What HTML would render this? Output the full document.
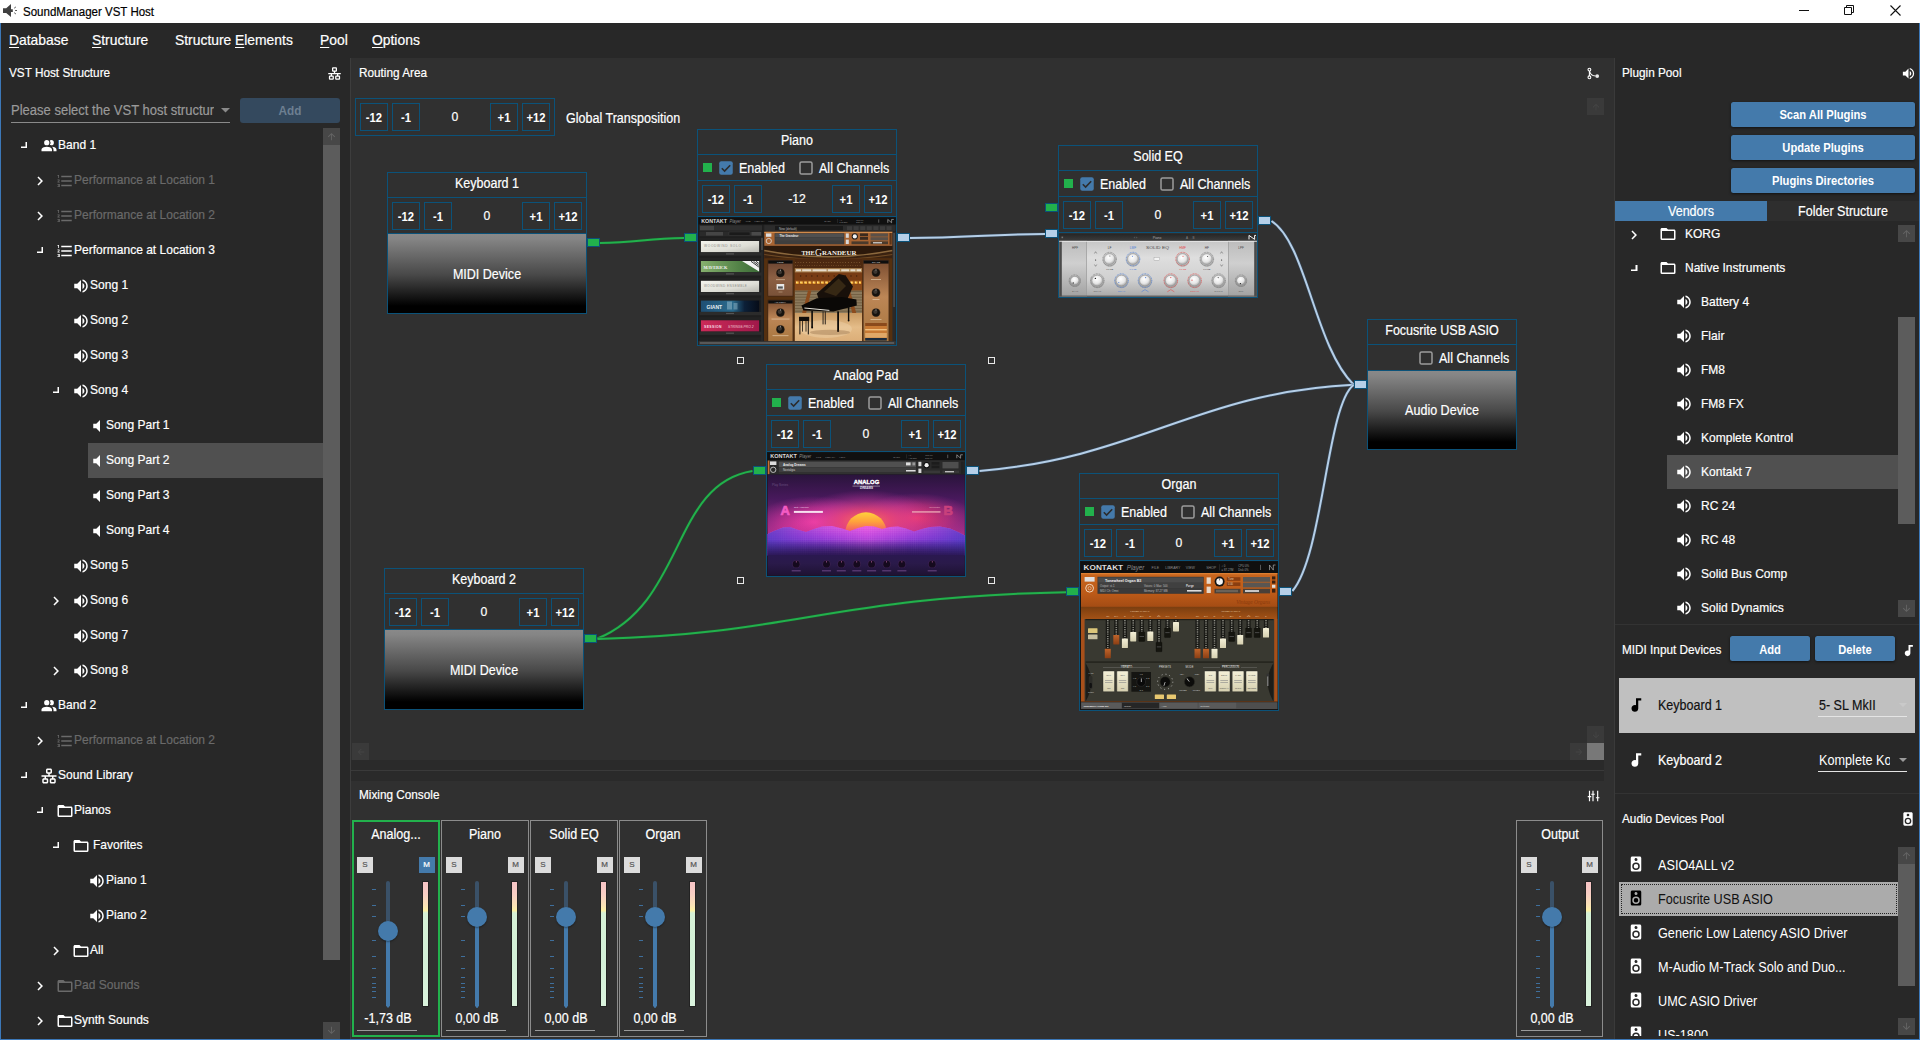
<!DOCTYPE html>
<html><head><meta charset="utf-8"><title>SoundManager VST Host</title>
<style>
html,body{margin:0;padding:0}
body{width:1920px;height:1040px;position:relative;overflow:hidden;background:#303030;font-family:"Liberation Sans",sans-serif;}
body div, body svg{position:absolute;box-sizing:border-box}
.btn{background:#447aab;border-radius:2.5px;box-shadow:0 1px 3px rgba(0,0,0,.55)}
.ak::first-letter{text-decoration:underline;text-underline-offset:1.5px}
</style></head><body>

<div style="left:0px;top:0px;width:1920px;height:23px;background:#ffffff;"></div>
<svg viewBox="0 0 20 22" style="left:0;top:0;width:20px;height:22px"><path d="M3,8.2H6.2L11,4V9.3H12.8V12H11V17L6.2,12.9H3Z" fill="#404040"/><path d="M14.2,8.2L15.9,6.9M15.1,10.5H17M14.2,12.7L15.9,14" stroke="#444" stroke-width="0.9" fill="none"/></svg>
<div style="left:23px;transform:scaleX(0.96);transform-origin:0 50%;top:1.5px;height:20px;line-height:20px;font-size:12px;color:#000;font-weight:400;white-space:nowrap;-webkit-text-stroke:0.2px #000;">SoundManager VST Host</div>
<div style="left:1799px;top:10px;width:10px;height:1px;background:#111;"></div>
<svg viewBox="0 0 10 10" style="left:1844px;top:5px;width:10px;height:10px"><path d="M0.5,2.5H7.5V9.5H0.5Z M2.5,2.5V0.5H9.5V7.5H7.5" fill="none" stroke="#111" stroke-width="1"/></svg>
<svg viewBox="0 0 11 11" style="left:1890px;top:5px;width:11px;height:11px"><path d="M0.5,0.5L10.5,10.5M10.5,0.5L0.5,10.5" fill="none" stroke="#111" stroke-width="1.1"/></svg>
<div style="left:0px;top:23px;width:1920px;height:1017px;background:#282828;"></div>
<div style="left:350px;top:58px;width:1265px;height:982px;background:#303030;"></div>
<div style="left:350px;top:58px;width:1px;height:982px;background:#3d3d3d;"></div>
<div style="left:351px;top:760px;width:1253px;height:21px;background:#2a2a2a;"></div>
<div style="left:351px;top:770px;width:1253px;height:1px;background:#3a3a3a;"></div>
<div style="left:1615px;top:58px;width:305px;height:982px;background:#282828;"></div>
<div style="left:1614px;top:58px;width:1px;height:982px;background:#3a3a3a;"></div>
<div class="ak" style="left:9px;transform:scaleX(0.925);transform-origin:0 50%;top:30.0px;height:20px;line-height:20px;font-size:15px;color:#fff;font-weight:400;white-space:nowrap;-webkit-text-stroke:0.2px #fff;">Database</div>
<div class="ak" style="left:92px;transform:scaleX(0.925);transform-origin:0 50%;top:30.0px;height:20px;line-height:20px;font-size:15px;color:#fff;font-weight:400;white-space:nowrap;-webkit-text-stroke:0.2px #fff;">Structure</div>
<div style="left:175px;transform:scaleX(0.925);transform-origin:0 50%;top:30.0px;height:20px;line-height:20px;font-size:15px;color:#fff;font-weight:400;white-space:nowrap;-webkit-text-stroke:0.2px #fff;">Structure</div>
<div class="ak" style="left:235.1435px;transform:scaleX(0.925);transform-origin:0 50%;top:30.0px;height:20px;line-height:20px;font-size:15px;color:#fff;font-weight:400;white-space:nowrap;-webkit-text-stroke:0.2px #fff;">Elements</div>
<div class="ak" style="left:320px;transform:scaleX(0.925);transform-origin:0 50%;top:30.0px;height:20px;line-height:20px;font-size:15px;color:#fff;font-weight:400;white-space:nowrap;-webkit-text-stroke:0.2px #fff;">Pool</div>
<div class="ak" style="left:372px;transform:scaleX(0.925);transform-origin:0 50%;top:30.0px;height:20px;line-height:20px;font-size:15px;color:#fff;font-weight:400;white-space:nowrap;-webkit-text-stroke:0.2px #fff;">Options</div>
<div style="left:9px;transform:scaleX(0.905);transform-origin:0 50%;top:62.5px;height:20px;line-height:20px;font-size:13px;color:#fff;font-weight:400;white-space:nowrap;-webkit-text-stroke:0.2px #fff;">VST Host Structure</div>
<svg viewBox="0 0 24 24" style="left:326.8px;top:66px;width:15px;height:15px;"><path fill="#fff" d="M10,2C8.89,2 8,2.89 8,4V7C8,8.11 8.89,9 10,9H11V11H2V13H6V15H5C3.89,15 3,15.89 3,17V20C3,21.11 3.89,22 5,22H9C10.11,22 11,21.11 11,20V17C11,15.89 10.11,15 9,15H8V13H16V15H15C13.89,15 13,15.89 13,17V20C13,21.11 13.89,22 15,22H19C20.11,22 21,21.11 21,20V17C21,15.89 20.11,15 19,15H18V13H22V11H13V9H14C15.11,9 16,8.11 16,7V4C16,2.89 15.11,2 14,2H10M10,4H14V7H10V4M5,17H9V20H5V17M15,17H19V20H15V17Z"/></svg>
<div style="left:11px;transform:scaleX(0.93);transform-origin:0 50%;top:100.0px;height:20px;line-height:20px;font-size:14px;color:#9a9a9a;font-weight:400;white-space:nowrap;-webkit-text-stroke:0.2px #9a9a9a;">Please select the VST host structure</div>
<div style="left:214px;top:100px;width:20px;height:20px;background:#282828;"></div>
<svg viewBox="0 0 10 5" style="left:221px;top:108px;width:9px;height:4.5px"><path d="M0,0H10L5,5Z" fill="#8a8a8a"/></svg>
<div style="left:11px;top:122px;width:219px;height:1px;background:#8a8a8a;"></div>
<div style="left:240px;top:98px;width:100px;height:25px;background:#34495e;border-radius:3px;"></div>
<div style="left:-10px;width:600px;text-align:center;transform:scaleX(0.905);transform-origin:50% 50%;top:100.5px;height:20px;line-height:20px;font-size:13px;color:#6d7f91;font-weight:700;white-space:nowrap;">Add</div>
<svg viewBox="0 0 6.5 6.5" style="left:20.5px;top:141.8px;width:6.5px;height:6.5px"><path d="M5.5,0V5.5H0" fill="none" stroke="#fff" stroke-width="2"/></svg>
<svg viewBox="0 0 24 24" style="left:40px;top:136.5px;width:18px;height:18px;"><path fill="#fff" d="M16 17V19H2V17S2 13 9 13 16 17 16 17M12.5 7.5A3.5 3.5 0 1 0 9 11A3.5 3.5 0 0 0 12.5 7.5M15.94 13A5.32 5.32 0 0 1 18 17V19H22V17S22 13.37 15.94 13M15 4A3.39 3.39 0 0 0 13.07 4.59A5 5 0 0 1 13.07 10.41A3.39 3.39 0 0 0 15 11A3.5 3.5 0 0 0 15 4Z"/></svg>
<div style="left:58px;transform:scaleX(0.925);transform-origin:0 50%;top:135.0px;height:20px;line-height:20px;font-size:13px;color:#fff;font-weight:400;white-space:nowrap;-webkit-text-stroke:0.2px #fff;">Band 1</div>
<svg viewBox="0 0 24 24" style="left:30.8px;top:172px;width:18px;height:18px;"><path fill="#fff" d="M8.59,16.58L13.17,12L8.59,7.41L10,6L16,12L10,18L8.59,16.58Z"/></svg>
<svg viewBox="0 0 24 24" style="left:56px;top:171.5px;width:18px;height:18px;"><path fill="#6a6a6a" d="M7,13V11H21V13H7M7,19V17H21V19H7M7,7V5H21V7H7M3,8V5H2V4H4V8H3M2,17V16H5V20H2V19H4V18.5H3V17.5H4V17H2M4.25,10A0.75,0.75 0 0,1 5,10.75C5,10.95 4.92,11.14 4.79,11.27L3.12,13H5V14H2V13.08L4,11H2V10H4.25Z"/></svg>
<div style="left:74px;transform:scaleX(0.925);transform-origin:0 50%;top:170.0px;height:20px;line-height:20px;font-size:13px;color:#6a6a6a;font-weight:400;white-space:nowrap;-webkit-text-stroke:0.2px #6a6a6a;">Performance at Location 1</div>
<svg viewBox="0 0 24 24" style="left:30.8px;top:207px;width:18px;height:18px;"><path fill="#fff" d="M8.59,16.58L13.17,12L8.59,7.41L10,6L16,12L10,18L8.59,16.58Z"/></svg>
<svg viewBox="0 0 24 24" style="left:56px;top:206.5px;width:18px;height:18px;"><path fill="#6a6a6a" d="M7,13V11H21V13H7M7,19V17H21V19H7M7,7V5H21V7H7M3,8V5H2V4H4V8H3M2,17V16H5V20H2V19H4V18.5H3V17.5H4V17H2M4.25,10A0.75,0.75 0 0,1 5,10.75C5,10.95 4.92,11.14 4.79,11.27L3.12,13H5V14H2V13.08L4,11H2V10H4.25Z"/></svg>
<div style="left:74px;transform:scaleX(0.925);transform-origin:0 50%;top:205.0px;height:20px;line-height:20px;font-size:13px;color:#6a6a6a;font-weight:400;white-space:nowrap;-webkit-text-stroke:0.2px #6a6a6a;">Performance at Location 2</div>
<svg viewBox="0 0 6.5 6.5" style="left:36.5px;top:246.8px;width:6.5px;height:6.5px"><path d="M5.5,0V5.5H0" fill="none" stroke="#fff" stroke-width="2"/></svg>
<svg viewBox="0 0 24 24" style="left:56px;top:241.5px;width:18px;height:18px;"><path fill="#fff" d="M7,13V11H21V13H7M7,19V17H21V19H7M7,7V5H21V7H7M3,8V5H2V4H4V8H3M2,17V16H5V20H2V19H4V18.5H3V17.5H4V17H2M4.25,10A0.75,0.75 0 0,1 5,10.75C5,10.95 4.92,11.14 4.79,11.27L3.12,13H5V14H2V13.08L4,11H2V10H4.25Z"/></svg>
<div style="left:74px;transform:scaleX(0.925);transform-origin:0 50%;top:240.0px;height:20px;line-height:20px;font-size:13px;color:#fff;font-weight:400;white-space:nowrap;-webkit-text-stroke:0.2px #fff;">Performance at Location 3</div>
<svg viewBox="0 0 24 24" style="left:72px;top:276.5px;width:18px;height:18px;"><path fill="#fff" d="M14,3.23V5.29C16.89,6.15 19,8.83 19,12C19,15.17 16.89,17.84 14,18.7V20.77C18,19.86 21,16.28 21,12C21,7.72 18,4.14 14,3.23M16.5,12C16.5,10.23 15.5,8.71 14,7.97V16C15.5,15.29 16.5,13.76 16.5,12M3,9V15H7L12,20V4L7,9H3Z"/></svg>
<div style="left:90px;transform:scaleX(0.925);transform-origin:0 50%;top:275.0px;height:20px;line-height:20px;font-size:13px;color:#fff;font-weight:400;white-space:nowrap;-webkit-text-stroke:0.2px #fff;">Song 1</div>
<svg viewBox="0 0 24 24" style="left:72px;top:311.5px;width:18px;height:18px;"><path fill="#fff" d="M14,3.23V5.29C16.89,6.15 19,8.83 19,12C19,15.17 16.89,17.84 14,18.7V20.77C18,19.86 21,16.28 21,12C21,7.72 18,4.14 14,3.23M16.5,12C16.5,10.23 15.5,8.71 14,7.97V16C15.5,15.29 16.5,13.76 16.5,12M3,9V15H7L12,20V4L7,9H3Z"/></svg>
<div style="left:90px;transform:scaleX(0.925);transform-origin:0 50%;top:310.0px;height:20px;line-height:20px;font-size:13px;color:#fff;font-weight:400;white-space:nowrap;-webkit-text-stroke:0.2px #fff;">Song 2</div>
<svg viewBox="0 0 24 24" style="left:72px;top:346.5px;width:18px;height:18px;"><path fill="#fff" d="M14,3.23V5.29C16.89,6.15 19,8.83 19,12C19,15.17 16.89,17.84 14,18.7V20.77C18,19.86 21,16.28 21,12C21,7.72 18,4.14 14,3.23M16.5,12C16.5,10.23 15.5,8.71 14,7.97V16C15.5,15.29 16.5,13.76 16.5,12M3,9V15H7L12,20V4L7,9H3Z"/></svg>
<div style="left:90px;transform:scaleX(0.925);transform-origin:0 50%;top:345.0px;height:20px;line-height:20px;font-size:13px;color:#fff;font-weight:400;white-space:nowrap;-webkit-text-stroke:0.2px #fff;">Song 3</div>
<svg viewBox="0 0 6.5 6.5" style="left:52.5px;top:386.8px;width:6.5px;height:6.5px"><path d="M5.5,0V5.5H0" fill="none" stroke="#fff" stroke-width="2"/></svg>
<svg viewBox="0 0 24 24" style="left:72px;top:381.5px;width:18px;height:18px;"><path fill="#fff" d="M14,3.23V5.29C16.89,6.15 19,8.83 19,12C19,15.17 16.89,17.84 14,18.7V20.77C18,19.86 21,16.28 21,12C21,7.72 18,4.14 14,3.23M16.5,12C16.5,10.23 15.5,8.71 14,7.97V16C15.5,15.29 16.5,13.76 16.5,12M3,9V15H7L12,20V4L7,9H3Z"/></svg>
<div style="left:90px;transform:scaleX(0.925);transform-origin:0 50%;top:380.0px;height:20px;line-height:20px;font-size:13px;color:#fff;font-weight:400;white-space:nowrap;-webkit-text-stroke:0.2px #fff;">Song 4</div>
<svg viewBox="0 0 24 24" style="left:88px;top:416.5px;width:18px;height:18px;"><path fill="#fff" d="M7,9V15H11L16,20V4L11,9H7Z"/></svg>
<div style="left:106px;transform:scaleX(0.925);transform-origin:0 50%;top:415.0px;height:20px;line-height:20px;font-size:13px;color:#fff;font-weight:400;white-space:nowrap;-webkit-text-stroke:0.2px #fff;">Song Part 1</div>
<div style="left:88px;top:443.0px;width:235px;height:35px;background:#505050;"></div>
<svg viewBox="0 0 24 24" style="left:88px;top:451.5px;width:18px;height:18px;"><path fill="#fff" d="M7,9V15H11L16,20V4L11,9H7Z"/></svg>
<div style="left:106px;transform:scaleX(0.925);transform-origin:0 50%;top:450.0px;height:20px;line-height:20px;font-size:13px;color:#fff;font-weight:400;white-space:nowrap;-webkit-text-stroke:0.2px #fff;">Song Part 2</div>
<svg viewBox="0 0 24 24" style="left:88px;top:486.5px;width:18px;height:18px;"><path fill="#fff" d="M7,9V15H11L16,20V4L11,9H7Z"/></svg>
<div style="left:106px;transform:scaleX(0.925);transform-origin:0 50%;top:485.0px;height:20px;line-height:20px;font-size:13px;color:#fff;font-weight:400;white-space:nowrap;-webkit-text-stroke:0.2px #fff;">Song Part 3</div>
<svg viewBox="0 0 24 24" style="left:88px;top:521.5px;width:18px;height:18px;"><path fill="#fff" d="M7,9V15H11L16,20V4L11,9H7Z"/></svg>
<div style="left:106px;transform:scaleX(0.925);transform-origin:0 50%;top:520.0px;height:20px;line-height:20px;font-size:13px;color:#fff;font-weight:400;white-space:nowrap;-webkit-text-stroke:0.2px #fff;">Song Part 4</div>
<svg viewBox="0 0 24 24" style="left:72px;top:556.5px;width:18px;height:18px;"><path fill="#fff" d="M14,3.23V5.29C16.89,6.15 19,8.83 19,12C19,15.17 16.89,17.84 14,18.7V20.77C18,19.86 21,16.28 21,12C21,7.72 18,4.14 14,3.23M16.5,12C16.5,10.23 15.5,8.71 14,7.97V16C15.5,15.29 16.5,13.76 16.5,12M3,9V15H7L12,20V4L7,9H3Z"/></svg>
<div style="left:90px;transform:scaleX(0.925);transform-origin:0 50%;top:555.0px;height:20px;line-height:20px;font-size:13px;color:#fff;font-weight:400;white-space:nowrap;-webkit-text-stroke:0.2px #fff;">Song 5</div>
<svg viewBox="0 0 24 24" style="left:46.8px;top:592px;width:18px;height:18px;"><path fill="#fff" d="M8.59,16.58L13.17,12L8.59,7.41L10,6L16,12L10,18L8.59,16.58Z"/></svg>
<svg viewBox="0 0 24 24" style="left:72px;top:591.5px;width:18px;height:18px;"><path fill="#fff" d="M14,3.23V5.29C16.89,6.15 19,8.83 19,12C19,15.17 16.89,17.84 14,18.7V20.77C18,19.86 21,16.28 21,12C21,7.72 18,4.14 14,3.23M16.5,12C16.5,10.23 15.5,8.71 14,7.97V16C15.5,15.29 16.5,13.76 16.5,12M3,9V15H7L12,20V4L7,9H3Z"/></svg>
<div style="left:90px;transform:scaleX(0.925);transform-origin:0 50%;top:590.0px;height:20px;line-height:20px;font-size:13px;color:#fff;font-weight:400;white-space:nowrap;-webkit-text-stroke:0.2px #fff;">Song 6</div>
<svg viewBox="0 0 24 24" style="left:72px;top:626.5px;width:18px;height:18px;"><path fill="#fff" d="M14,3.23V5.29C16.89,6.15 19,8.83 19,12C19,15.17 16.89,17.84 14,18.7V20.77C18,19.86 21,16.28 21,12C21,7.72 18,4.14 14,3.23M16.5,12C16.5,10.23 15.5,8.71 14,7.97V16C15.5,15.29 16.5,13.76 16.5,12M3,9V15H7L12,20V4L7,9H3Z"/></svg>
<div style="left:90px;transform:scaleX(0.925);transform-origin:0 50%;top:625.0px;height:20px;line-height:20px;font-size:13px;color:#fff;font-weight:400;white-space:nowrap;-webkit-text-stroke:0.2px #fff;">Song 7</div>
<svg viewBox="0 0 24 24" style="left:46.8px;top:662px;width:18px;height:18px;"><path fill="#fff" d="M8.59,16.58L13.17,12L8.59,7.41L10,6L16,12L10,18L8.59,16.58Z"/></svg>
<svg viewBox="0 0 24 24" style="left:72px;top:661.5px;width:18px;height:18px;"><path fill="#fff" d="M14,3.23V5.29C16.89,6.15 19,8.83 19,12C19,15.17 16.89,17.84 14,18.7V20.77C18,19.86 21,16.28 21,12C21,7.72 18,4.14 14,3.23M16.5,12C16.5,10.23 15.5,8.71 14,7.97V16C15.5,15.29 16.5,13.76 16.5,12M3,9V15H7L12,20V4L7,9H3Z"/></svg>
<div style="left:90px;transform:scaleX(0.925);transform-origin:0 50%;top:660.0px;height:20px;line-height:20px;font-size:13px;color:#fff;font-weight:400;white-space:nowrap;-webkit-text-stroke:0.2px #fff;">Song 8</div>
<svg viewBox="0 0 6.5 6.5" style="left:20.5px;top:701.8px;width:6.5px;height:6.5px"><path d="M5.5,0V5.5H0" fill="none" stroke="#fff" stroke-width="2"/></svg>
<svg viewBox="0 0 24 24" style="left:40px;top:696.5px;width:18px;height:18px;"><path fill="#fff" d="M16 17V19H2V17S2 13 9 13 16 17 16 17M12.5 7.5A3.5 3.5 0 1 0 9 11A3.5 3.5 0 0 0 12.5 7.5M15.94 13A5.32 5.32 0 0 1 18 17V19H22V17S22 13.37 15.94 13M15 4A3.39 3.39 0 0 0 13.07 4.59A5 5 0 0 1 13.07 10.41A3.39 3.39 0 0 0 15 11A3.5 3.5 0 0 0 15 4Z"/></svg>
<div style="left:58px;transform:scaleX(0.925);transform-origin:0 50%;top:695.0px;height:20px;line-height:20px;font-size:13px;color:#fff;font-weight:400;white-space:nowrap;-webkit-text-stroke:0.2px #fff;">Band 2</div>
<svg viewBox="0 0 24 24" style="left:30.8px;top:732px;width:18px;height:18px;"><path fill="#fff" d="M8.59,16.58L13.17,12L8.59,7.41L10,6L16,12L10,18L8.59,16.58Z"/></svg>
<svg viewBox="0 0 24 24" style="left:56px;top:731.5px;width:18px;height:18px;"><path fill="#6a6a6a" d="M7,13V11H21V13H7M7,19V17H21V19H7M7,7V5H21V7H7M3,8V5H2V4H4V8H3M2,17V16H5V20H2V19H4V18.5H3V17.5H4V17H2M4.25,10A0.75,0.75 0 0,1 5,10.75C5,10.95 4.92,11.14 4.79,11.27L3.12,13H5V14H2V13.08L4,11H2V10H4.25Z"/></svg>
<div style="left:74px;transform:scaleX(0.925);transform-origin:0 50%;top:730.0px;height:20px;line-height:20px;font-size:13px;color:#6a6a6a;font-weight:400;white-space:nowrap;-webkit-text-stroke:0.2px #6a6a6a;">Performance at Location 2</div>
<svg viewBox="0 0 6.5 6.5" style="left:20.5px;top:771.8px;width:6.5px;height:6.5px"><path d="M5.5,0V5.5H0" fill="none" stroke="#fff" stroke-width="2"/></svg>
<svg viewBox="0 0 24 24" style="left:40px;top:766.5px;width:18px;height:18px;"><path fill="#fff" d="M10,2C8.89,2 8,2.89 8,4V7C8,8.11 8.89,9 10,9H11V11H2V13H6V15H5C3.89,15 3,15.89 3,17V20C3,21.11 3.89,22 5,22H9C10.11,22 11,21.11 11,20V17C11,15.89 10.11,15 9,15H8V13H16V15H15C13.89,15 13,15.89 13,17V20C13,21.11 13.89,22 15,22H19C20.11,22 21,21.11 21,20V17C21,15.89 20.11,15 19,15H18V13H22V11H13V9H14C15.11,9 16,8.11 16,7V4C16,2.89 15.11,2 14,2H10M10,4H14V7H10V4M5,17H9V20H5V17M15,17H19V20H15V17Z"/></svg>
<div style="left:58px;transform:scaleX(0.925);transform-origin:0 50%;top:765.0px;height:20px;line-height:20px;font-size:13px;color:#fff;font-weight:400;white-space:nowrap;-webkit-text-stroke:0.2px #fff;">Sound Library</div>
<svg viewBox="0 0 6.5 6.5" style="left:36.5px;top:806.8px;width:6.5px;height:6.5px"><path d="M5.5,0V5.5H0" fill="none" stroke="#fff" stroke-width="2"/></svg>
<svg viewBox="0 0 24 24" style="left:56px;top:801.5px;width:18px;height:18px;"><path fill="#fff" d="M20,18H4V8H20M20,6H12L10,4H4C2.89,4 2,4.89 2,6V18A2,2 0 0,0 4,20H20A2,2 0 0,0 22,18V8C22,6.89 21.1,6 20,6Z"/></svg>
<div style="left:74px;transform:scaleX(0.925);transform-origin:0 50%;top:800.0px;height:20px;line-height:20px;font-size:13px;color:#fff;font-weight:400;white-space:nowrap;-webkit-text-stroke:0.2px #fff;">Pianos</div>
<svg viewBox="0 0 6.5 6.5" style="left:52.5px;top:841.8px;width:6.5px;height:6.5px"><path d="M5.5,0V5.5H0" fill="none" stroke="#fff" stroke-width="2"/></svg>
<svg viewBox="0 0 24 24" style="left:72px;top:836.5px;width:18px;height:18px;"><path fill="#fff" d="M20,18H4V8H20M20,6H12L10,4H4C2.89,4 2,4.89 2,6V18A2,2 0 0,0 4,20H20A2,2 0 0,0 22,18V8C22,6.89 21.1,6 20,6Z"/></svg>
<div style="left:93px;transform:scaleX(0.925);transform-origin:0 50%;top:835.0px;height:20px;line-height:20px;font-size:13px;color:#fff;font-weight:400;white-space:nowrap;-webkit-text-stroke:0.2px #fff;">Favorites</div>
<svg viewBox="0 0 24 24" style="left:88px;top:871.5px;width:18px;height:18px;"><path fill="#fff" d="M14,3.23V5.29C16.89,6.15 19,8.83 19,12C19,15.17 16.89,17.84 14,18.7V20.77C18,19.86 21,16.28 21,12C21,7.72 18,4.14 14,3.23M16.5,12C16.5,10.23 15.5,8.71 14,7.97V16C15.5,15.29 16.5,13.76 16.5,12M3,9V15H7L12,20V4L7,9H3Z"/></svg>
<div style="left:106px;transform:scaleX(0.925);transform-origin:0 50%;top:870.0px;height:20px;line-height:20px;font-size:13px;color:#fff;font-weight:400;white-space:nowrap;-webkit-text-stroke:0.2px #fff;">Piano 1</div>
<svg viewBox="0 0 24 24" style="left:88px;top:906.5px;width:18px;height:18px;"><path fill="#fff" d="M14,3.23V5.29C16.89,6.15 19,8.83 19,12C19,15.17 16.89,17.84 14,18.7V20.77C18,19.86 21,16.28 21,12C21,7.72 18,4.14 14,3.23M16.5,12C16.5,10.23 15.5,8.71 14,7.97V16C15.5,15.29 16.5,13.76 16.5,12M3,9V15H7L12,20V4L7,9H3Z"/></svg>
<div style="left:106px;transform:scaleX(0.925);transform-origin:0 50%;top:905.0px;height:20px;line-height:20px;font-size:13px;color:#fff;font-weight:400;white-space:nowrap;-webkit-text-stroke:0.2px #fff;">Piano 2</div>
<svg viewBox="0 0 24 24" style="left:46.8px;top:942px;width:18px;height:18px;"><path fill="#fff" d="M8.59,16.58L13.17,12L8.59,7.41L10,6L16,12L10,18L8.59,16.58Z"/></svg>
<svg viewBox="0 0 24 24" style="left:72px;top:941.5px;width:18px;height:18px;"><path fill="#fff" d="M20,18H4V8H20M20,6H12L10,4H4C2.89,4 2,4.89 2,6V18A2,2 0 0,0 4,20H20A2,2 0 0,0 22,18V8C22,6.89 21.1,6 20,6Z"/></svg>
<div style="left:90px;transform:scaleX(0.925);transform-origin:0 50%;top:940.0px;height:20px;line-height:20px;font-size:13px;color:#fff;font-weight:400;white-space:nowrap;-webkit-text-stroke:0.2px #fff;">All</div>
<svg viewBox="0 0 24 24" style="left:30.8px;top:977px;width:18px;height:18px;"><path fill="#fff" d="M8.59,16.58L13.17,12L8.59,7.41L10,6L16,12L10,18L8.59,16.58Z"/></svg>
<svg viewBox="0 0 24 24" style="left:56px;top:976.5px;width:18px;height:18px;"><path fill="#6a6a6a" d="M20,18H4V8H20M20,6H12L10,4H4C2.89,4 2,4.89 2,6V18A2,2 0 0,0 4,20H20A2,2 0 0,0 22,18V8C22,6.89 21.1,6 20,6Z"/></svg>
<div style="left:74px;transform:scaleX(0.925);transform-origin:0 50%;top:975.0px;height:20px;line-height:20px;font-size:13px;color:#6a6a6a;font-weight:400;white-space:nowrap;-webkit-text-stroke:0.2px #6a6a6a;">Pad Sounds</div>
<svg viewBox="0 0 24 24" style="left:30.8px;top:1012px;width:18px;height:18px;"><path fill="#fff" d="M8.59,16.58L13.17,12L8.59,7.41L10,6L16,12L10,18L8.59,16.58Z"/></svg>
<svg viewBox="0 0 24 24" style="left:56px;top:1011.5px;width:18px;height:18px;"><path fill="#fff" d="M20,18H4V8H20M20,6H12L10,4H4C2.89,4 2,4.89 2,6V18A2,2 0 0,0 4,20H20A2,2 0 0,0 22,18V8C22,6.89 21.1,6 20,6Z"/></svg>
<div style="left:74px;transform:scaleX(0.925);transform-origin:0 50%;top:1010.0px;height:20px;line-height:20px;font-size:13px;color:#fff;font-weight:400;white-space:nowrap;-webkit-text-stroke:0.2px #fff;">Synth Sounds</div>
<div style="left:323px;top:128px;width:17px;height:17px;background:#474747;"></div>
<svg viewBox="0 0 24 24" style="left:326px;top:131px;width:11px;height:11px;"><path fill="#646464" d="M13,20H11V8L5.5,13.5L4.08,12.08L12,4.16L19.92,12.08L18.5,13.5L13,8V20Z"/></svg>
<div style="left:323px;top:1022px;width:17px;height:17px;background:#474747;"></div>
<svg viewBox="0 0 24 24" style="left:326px;top:1025px;width:11px;height:11px;transform:rotate(180deg);"><path fill="#646464" d="M13,20H11V8L5.5,13.5L4.08,12.08L12,4.16L19.92,12.08L18.5,13.5L13,8V20Z"/></svg>
<div style="left:323px;top:145px;width:17px;height:815px;background:#5c5c5c;"></div>
<div style="left:358.5px;transform:scaleX(0.905);transform-origin:0 50%;top:62.5px;height:20px;line-height:20px;font-size:13px;color:#fff;font-weight:400;white-space:nowrap;-webkit-text-stroke:0.2px #fff;">Routing Area</div>
<svg viewBox="1584 66 16 14" style="left:1584px;top:66px;width:16px;height:14px"><g fill="none" stroke="#fff" stroke-width="1.1"><circle cx="1589.4" cy="69.6" r="1.4"/><circle cx="1589.4" cy="77.3" r="1.4"/><path d="M1589.4,71V75.9M1589.7,71.2Q1590.2,75.6 1595.6,76"/></g><circle cx="1597.2" cy="76.1" r="1.9" fill="#e8e8e8"/></svg>
<div style="left:1587px;top:98px;width:17px;height:17px;background:#3a3a3a;"></div>
<svg viewBox="0 0 24 24" style="left:1590.5px;top:101.5px;width:10px;height:10px;"><path fill="#454545" d="M13,20H11V8L5.5,13.5L4.08,12.08L12,4.16L19.92,12.08L18.5,13.5L13,8V20Z"/></svg>
<div style="left:1587px;top:726px;width:17px;height:17px;background:#3a3a3a;"></div>
<svg viewBox="0 0 24 24" style="left:1590.5px;top:729.5px;width:10px;height:10px;transform:rotate(180deg);"><path fill="#454545" d="M13,20H11V8L5.5,13.5L4.08,12.08L12,4.16L19.92,12.08L18.5,13.5L13,8V20Z"/></svg>
<div style="left:352px;top:743px;width:17px;height:17px;background:#3a3a3a;"></div>
<svg viewBox="0 0 24 24" style="left:355.5px;top:746.5px;width:10px;height:10px;transform:rotate(-90deg);"><path fill="#454545" d="M13,20H11V8L5.5,13.5L4.08,12.08L12,4.16L19.92,12.08L18.5,13.5L13,8V20Z"/></svg>
<div style="left:1570px;top:743px;width:17px;height:17px;background:#3a3a3a;"></div>
<svg viewBox="0 0 24 24" style="left:1573.5px;top:746.5px;width:10px;height:10px;transform:rotate(90deg);"><path fill="#454545" d="M13,20H11V8L5.5,13.5L4.08,12.08L12,4.16L19.92,12.08L18.5,13.5L13,8V20Z"/></svg>
<div style="left:1587px;top:743px;width:17px;height:17px;background:#787878;"></div>
<div style="left:355px;top:98px;width:200px;height:38px;border:1px solid #0b5279;"></div>
<div style="left:360px;top:103px;width:28px;height:28px;border:1px solid #0b5279;"></div>
<div style="left:74px;width:600px;text-align:center;transform:scaleX(0.9);transform-origin:50% 50%;top:107.6px;height:20px;line-height:20px;font-size:12.5px;color:#fff;font-weight:700;white-space:nowrap;">-12</div>
<div style="left:392px;top:103px;width:28px;height:28px;border:1px solid #0b5279;"></div>
<div style="left:106px;width:600px;text-align:center;transform:scaleX(0.9);transform-origin:50% 50%;top:107.6px;height:20px;line-height:20px;font-size:12.5px;color:#fff;font-weight:700;white-space:nowrap;">-1</div>
<div style="left:490px;top:103px;width:28px;height:28px;border:1px solid #0b5279;"></div>
<div style="left:204px;width:600px;text-align:center;transform:scaleX(0.9);transform-origin:50% 50%;top:107.6px;height:20px;line-height:20px;font-size:12.5px;color:#fff;font-weight:700;white-space:nowrap;">+1</div>
<div style="left:522px;top:103px;width:28px;height:28px;border:1px solid #0b5279;"></div>
<div style="left:236px;width:600px;text-align:center;transform:scaleX(0.9);transform-origin:50% 50%;top:107.6px;height:20px;line-height:20px;font-size:12.5px;color:#fff;font-weight:700;white-space:nowrap;">+12</div>
<div style="left:155px;width:600px;text-align:center;transform:scaleX(0.905);transform-origin:50% 50%;top:106.8px;height:20px;line-height:20px;font-size:13.5px;color:#fff;font-weight:400;white-space:nowrap;-webkit-text-stroke:0.2px #fff;">0</div>
<div style="left:565.5px;transform:scaleX(0.895);transform-origin:0 50%;top:107.5px;height:20px;line-height:20px;font-size:14px;color:#fff;font-weight:400;white-space:nowrap;-webkit-text-stroke:0.2px #fff;">Global Transposition</div>
<svg viewBox="0 0 1920 1040" style="left:0;top:0;width:1920px;height:1040px"><path d="M600,243 C637.8,242.4 646.2,238.6 684,238" fill="none" stroke="#1d5a2e" stroke-width="3.2" opacity="0.55"/><path d="M600,243 C637.8,242.4 646.2,238.6 684,238" fill="none" stroke="#22b14c" stroke-width="2"/><path d="M910,238 C970.8,237.5 984.2,234.5 1045,234" fill="none" stroke="#3c5a78" stroke-width="3.2" opacity="0.55"/><path d="M910,238 C970.8,237.5 984.2,234.5 1045,234" fill="none" stroke="#b5cfe8" stroke-width="2"/><path d="M1271.5,221 C1306.2,242.9 1314.9,346.7 1353.5,384.5" fill="none" stroke="#3c5a78" stroke-width="3.2" opacity="0.55"/><path d="M1271.5,221 C1306.2,242.9 1314.9,346.7 1353.5,384.5" fill="none" stroke="#b5cfe8" stroke-width="2"/><path d="M979.5,471 C1139.0,457.8 1196.4,392.6 1353.5,384.8" fill="none" stroke="#3c5a78" stroke-width="3.2" opacity="0.55"/><path d="M979.5,471 C1139.0,457.8 1196.4,392.6 1353.5,384.8" fill="none" stroke="#b5cfe8" stroke-width="2"/><path d="M1292.4,591 C1323.2,555.0 1326.8,405.4 1353.5,385" fill="none" stroke="#3c5a78" stroke-width="3.2" opacity="0.55"/><path d="M1292.4,591 C1323.2,555.0 1326.8,405.4 1353.5,385" fill="none" stroke="#b5cfe8" stroke-width="2"/><path d="M597.5,638.5 C685.9,602.0 671.1,484.0 752.5,471" fill="none" stroke="#1d5a2e" stroke-width="3.2" opacity="0.55"/><path d="M597.5,638.5 C685.9,602.0 671.1,484.0 752.5,471" fill="none" stroke="#22b14c" stroke-width="2"/><path d="M597.5,638.9 C798.7,633.7 828.6,597.3 1066,592.2" fill="none" stroke="#1d5a2e" stroke-width="3.2" opacity="0.55"/><path d="M597.5,638.9 C798.7,633.7 828.6,597.3 1066,592.2" fill="none" stroke="#22b14c" stroke-width="2"/></svg>
<div style="left:387px;top:172px;width:200px;height:142px;background:#303030;border:1px solid #0b5279;"></div>
<div style="left:187.0px;width:600px;text-align:center;transform:scaleX(0.895);transform-origin:50% 50%;top:173.3px;height:20px;line-height:20px;font-size:14px;color:#fff;font-weight:400;white-space:nowrap;-webkit-text-stroke:0.2px #fff;">Keyboard 1</div>
<div style="left:387px;top:197px;width:200px;height:1px;background:#0b5279;"></div>
<div style="left:392px;top:202px;width:28px;height:28px;border:1px solid #0b5279;"></div>
<div style="left:106px;width:600px;text-align:center;transform:scaleX(0.9);transform-origin:50% 50%;top:206.6px;height:20px;line-height:20px;font-size:12.5px;color:#fff;font-weight:700;white-space:nowrap;">-12</div>
<div style="left:424px;top:202px;width:28px;height:28px;border:1px solid #0b5279;"></div>
<div style="left:138px;width:600px;text-align:center;transform:scaleX(0.9);transform-origin:50% 50%;top:206.6px;height:20px;line-height:20px;font-size:12.5px;color:#fff;font-weight:700;white-space:nowrap;">-1</div>
<div style="left:522px;top:202px;width:28px;height:28px;border:1px solid #0b5279;"></div>
<div style="left:236px;width:600px;text-align:center;transform:scaleX(0.9);transform-origin:50% 50%;top:206.6px;height:20px;line-height:20px;font-size:12.5px;color:#fff;font-weight:700;white-space:nowrap;">+1</div>
<div style="left:554px;top:202px;width:28px;height:28px;border:1px solid #0b5279;"></div>
<div style="left:268px;width:600px;text-align:center;transform:scaleX(0.9);transform-origin:50% 50%;top:206.6px;height:20px;line-height:20px;font-size:12.5px;color:#fff;font-weight:700;white-space:nowrap;">+12</div>
<div style="left:187px;width:600px;text-align:center;transform:scaleX(0.905);transform-origin:50% 50%;top:205.8px;height:20px;line-height:20px;font-size:13.5px;color:#fff;font-weight:400;white-space:nowrap;-webkit-text-stroke:0.2px #fff;">0</div>
<div style="left:387px;top:233px;width:200px;height:1px;background:#0b5279;"></div>
<div style="left:388px;top:234px;width:198px;height:79px;background:linear-gradient(#898989 0%,#858585 6%,#484848 52%,#000 91%,#000 100%);"></div>
<div style="left:187.0px;width:600px;text-align:center;transform:scaleX(0.895);transform-origin:50% 50%;top:263.7px;height:20px;line-height:20px;font-size:14px;color:#fff;font-weight:400;white-space:nowrap;-webkit-text-stroke:0.2px #fff;">MIDI Device</div>
<div style="left:587px;top:237.9px;width:13px;height:9.2px;background:#22b14c;border:1px solid #0b5279;"></div>
<div style="left:384px;top:568px;width:200px;height:142px;background:#303030;border:1px solid #0b5279;"></div>
<div style="left:184.0px;width:600px;text-align:center;transform:scaleX(0.895);transform-origin:50% 50%;top:569.3px;height:20px;line-height:20px;font-size:14px;color:#fff;font-weight:400;white-space:nowrap;-webkit-text-stroke:0.2px #fff;">Keyboard 2</div>
<div style="left:384px;top:593px;width:200px;height:1px;background:#0b5279;"></div>
<div style="left:389px;top:598px;width:28px;height:28px;border:1px solid #0b5279;"></div>
<div style="left:103px;width:600px;text-align:center;transform:scaleX(0.9);transform-origin:50% 50%;top:602.6px;height:20px;line-height:20px;font-size:12.5px;color:#fff;font-weight:700;white-space:nowrap;">-12</div>
<div style="left:421px;top:598px;width:28px;height:28px;border:1px solid #0b5279;"></div>
<div style="left:135px;width:600px;text-align:center;transform:scaleX(0.9);transform-origin:50% 50%;top:602.6px;height:20px;line-height:20px;font-size:12.5px;color:#fff;font-weight:700;white-space:nowrap;">-1</div>
<div style="left:519px;top:598px;width:28px;height:28px;border:1px solid #0b5279;"></div>
<div style="left:233px;width:600px;text-align:center;transform:scaleX(0.9);transform-origin:50% 50%;top:602.6px;height:20px;line-height:20px;font-size:12.5px;color:#fff;font-weight:700;white-space:nowrap;">+1</div>
<div style="left:551px;top:598px;width:28px;height:28px;border:1px solid #0b5279;"></div>
<div style="left:265px;width:600px;text-align:center;transform:scaleX(0.9);transform-origin:50% 50%;top:602.6px;height:20px;line-height:20px;font-size:12.5px;color:#fff;font-weight:700;white-space:nowrap;">+12</div>
<div style="left:184px;width:600px;text-align:center;transform:scaleX(0.905);transform-origin:50% 50%;top:601.8px;height:20px;line-height:20px;font-size:13.5px;color:#fff;font-weight:400;white-space:nowrap;-webkit-text-stroke:0.2px #fff;">0</div>
<div style="left:384px;top:629px;width:200px;height:1px;background:#0b5279;"></div>
<div style="left:385px;top:630px;width:198px;height:79px;background:linear-gradient(#898989 0%,#858585 6%,#484848 52%,#000 91%,#000 100%);"></div>
<div style="left:184.0px;width:600px;text-align:center;transform:scaleX(0.895);transform-origin:50% 50%;top:659.7px;height:20px;line-height:20px;font-size:14px;color:#fff;font-weight:400;white-space:nowrap;-webkit-text-stroke:0.2px #fff;">MIDI Device</div>
<div style="left:584px;top:633.9px;width:13px;height:9.2px;background:#22b14c;border:1px solid #0b5279;"></div>
<div style="left:697px;top:129px;width:200px;height:217px;background:#303030;border:1px solid #0b5279;"></div>
<div style="left:497.0px;width:600px;text-align:center;transform:scaleX(0.895);transform-origin:50% 50%;top:130.3px;height:20px;line-height:20px;font-size:14px;color:#fff;font-weight:400;white-space:nowrap;-webkit-text-stroke:0.2px #fff;">Piano</div>
<div style="left:697px;top:154px;width:200px;height:1px;background:#0b5279;"></div>
<div style="left:703px;top:163px;width:9px;height:9px;background:#22b14c;"></div>
<svg viewBox="0 0 14 14" style="left:719px;top:160.5px;width:14px;height:14px"><rect x="0.25" y="0.25" width="13.5" height="13.5" rx="2" fill="#447aab"/><path d="M2.8,7.2L5.6,10L11.2,4.2" fill="none" stroke="#2c2c2c" stroke-width="1.6"/></svg>
<div style="left:739.3px;transform:scaleX(0.895);transform-origin:0 50%;top:158.4px;height:20px;line-height:20px;font-size:14px;color:#fff;font-weight:400;white-space:nowrap;-webkit-text-stroke:0.2px #fff;">Enabled</div>
<svg viewBox="0 0 14 14" style="left:799px;top:160.5px;width:14px;height:14px"><rect x="1" y="1" width="12" height="12" rx="1.6" fill="none" stroke="#9c9c9c" stroke-width="1.5"/></svg>
<div style="left:819.3px;transform:scaleX(0.895);transform-origin:0 50%;top:158.4px;height:20px;line-height:20px;font-size:14px;color:#fff;font-weight:400;white-space:nowrap;-webkit-text-stroke:0.2px #fff;">All Channels</div>
<div style="left:697px;top:180px;width:200px;height:1px;background:#0b5279;"></div>
<div style="left:702px;top:185px;width:28px;height:28px;border:1px solid #0b5279;"></div>
<div style="left:416px;width:600px;text-align:center;transform:scaleX(0.9);transform-origin:50% 50%;top:189.6px;height:20px;line-height:20px;font-size:12.5px;color:#fff;font-weight:700;white-space:nowrap;">-12</div>
<div style="left:734px;top:185px;width:28px;height:28px;border:1px solid #0b5279;"></div>
<div style="left:448px;width:600px;text-align:center;transform:scaleX(0.9);transform-origin:50% 50%;top:189.6px;height:20px;line-height:20px;font-size:12.5px;color:#fff;font-weight:700;white-space:nowrap;">-1</div>
<div style="left:832px;top:185px;width:28px;height:28px;border:1px solid #0b5279;"></div>
<div style="left:546px;width:600px;text-align:center;transform:scaleX(0.9);transform-origin:50% 50%;top:189.6px;height:20px;line-height:20px;font-size:12.5px;color:#fff;font-weight:700;white-space:nowrap;">+1</div>
<div style="left:864px;top:185px;width:28px;height:28px;border:1px solid #0b5279;"></div>
<div style="left:578px;width:600px;text-align:center;transform:scaleX(0.9);transform-origin:50% 50%;top:189.6px;height:20px;line-height:20px;font-size:12.5px;color:#fff;font-weight:700;white-space:nowrap;">+12</div>
<div style="left:497px;width:600px;text-align:center;transform:scaleX(0.905);transform-origin:50% 50%;top:188.8px;height:20px;line-height:20px;font-size:13.5px;color:#fff;font-weight:400;white-space:nowrap;-webkit-text-stroke:0.2px #fff;">-12</div>
<div style="left:697px;top:216px;width:200px;height:1px;background:#0b5279;"></div>
<div style="left:684px;top:232.9px;width:13px;height:9.2px;background:#22b14c;border:1px solid #0b5279;"></div>
<div style="left:897px;top:232.9px;width:13px;height:9.2px;background:#b5cfe8;border:1px solid #0b5279;"></div>
<div style="left:1058px;top:145px;width:200px;height:153px;background:#303030;border:1px solid #0b5279;"></div>
<div style="left:858.0px;width:600px;text-align:center;transform:scaleX(0.895);transform-origin:50% 50%;top:146.3px;height:20px;line-height:20px;font-size:14px;color:#fff;font-weight:400;white-space:nowrap;-webkit-text-stroke:0.2px #fff;">Solid EQ</div>
<div style="left:1058px;top:170px;width:200px;height:1px;background:#0b5279;"></div>
<div style="left:1064px;top:179px;width:9px;height:9px;background:#22b14c;"></div>
<svg viewBox="0 0 14 14" style="left:1080px;top:176.5px;width:14px;height:14px"><rect x="0.25" y="0.25" width="13.5" height="13.5" rx="2" fill="#447aab"/><path d="M2.8,7.2L5.6,10L11.2,4.2" fill="none" stroke="#2c2c2c" stroke-width="1.6"/></svg>
<div style="left:1100.3px;transform:scaleX(0.895);transform-origin:0 50%;top:174.4px;height:20px;line-height:20px;font-size:14px;color:#fff;font-weight:400;white-space:nowrap;-webkit-text-stroke:0.2px #fff;">Enabled</div>
<svg viewBox="0 0 14 14" style="left:1160px;top:176.5px;width:14px;height:14px"><rect x="1" y="1" width="12" height="12" rx="1.6" fill="none" stroke="#9c9c9c" stroke-width="1.5"/></svg>
<div style="left:1180.3px;transform:scaleX(0.895);transform-origin:0 50%;top:174.4px;height:20px;line-height:20px;font-size:14px;color:#fff;font-weight:400;white-space:nowrap;-webkit-text-stroke:0.2px #fff;">All Channels</div>
<div style="left:1058px;top:196px;width:200px;height:1px;background:#0b5279;"></div>
<div style="left:1063px;top:201px;width:28px;height:28px;border:1px solid #0b5279;"></div>
<div style="left:777px;width:600px;text-align:center;transform:scaleX(0.9);transform-origin:50% 50%;top:205.6px;height:20px;line-height:20px;font-size:12.5px;color:#fff;font-weight:700;white-space:nowrap;">-12</div>
<div style="left:1095px;top:201px;width:28px;height:28px;border:1px solid #0b5279;"></div>
<div style="left:809px;width:600px;text-align:center;transform:scaleX(0.9);transform-origin:50% 50%;top:205.6px;height:20px;line-height:20px;font-size:12.5px;color:#fff;font-weight:700;white-space:nowrap;">-1</div>
<div style="left:1193px;top:201px;width:28px;height:28px;border:1px solid #0b5279;"></div>
<div style="left:907px;width:600px;text-align:center;transform:scaleX(0.9);transform-origin:50% 50%;top:205.6px;height:20px;line-height:20px;font-size:12.5px;color:#fff;font-weight:700;white-space:nowrap;">+1</div>
<div style="left:1225px;top:201px;width:28px;height:28px;border:1px solid #0b5279;"></div>
<div style="left:939px;width:600px;text-align:center;transform:scaleX(0.9);transform-origin:50% 50%;top:205.6px;height:20px;line-height:20px;font-size:12.5px;color:#fff;font-weight:700;white-space:nowrap;">+12</div>
<div style="left:858px;width:600px;text-align:center;transform:scaleX(0.905);transform-origin:50% 50%;top:204.8px;height:20px;line-height:20px;font-size:13.5px;color:#fff;font-weight:400;white-space:nowrap;-webkit-text-stroke:0.2px #fff;">0</div>
<div style="left:1058px;top:232px;width:200px;height:1px;background:#0b5279;"></div>
<div style="left:1045px;top:202.9px;width:13px;height:9.2px;background:#22b14c;border:1px solid #0b5279;"></div>
<div style="left:1045px;top:228.9px;width:13px;height:9.2px;background:#b5cfe8;border:1px solid #0b5279;"></div>
<div style="left:1258px;top:215.9px;width:13px;height:9.2px;background:#b5cfe8;border:1px solid #0b5279;"></div>
<div style="left:766px;top:364px;width:200px;height:213px;background:#303030;border:1px solid #0b5279;"></div>
<div style="left:566.0px;width:600px;text-align:center;transform:scaleX(0.895);transform-origin:50% 50%;top:365.3px;height:20px;line-height:20px;font-size:14px;color:#fff;font-weight:400;white-space:nowrap;-webkit-text-stroke:0.2px #fff;">Analog Pad</div>
<div style="left:766px;top:389px;width:200px;height:1px;background:#0b5279;"></div>
<div style="left:772px;top:398px;width:9px;height:9px;background:#22b14c;"></div>
<svg viewBox="0 0 14 14" style="left:788px;top:395.5px;width:14px;height:14px"><rect x="0.25" y="0.25" width="13.5" height="13.5" rx="2" fill="#447aab"/><path d="M2.8,7.2L5.6,10L11.2,4.2" fill="none" stroke="#2c2c2c" stroke-width="1.6"/></svg>
<div style="left:808.3px;transform:scaleX(0.895);transform-origin:0 50%;top:393.4px;height:20px;line-height:20px;font-size:14px;color:#fff;font-weight:400;white-space:nowrap;-webkit-text-stroke:0.2px #fff;">Enabled</div>
<svg viewBox="0 0 14 14" style="left:868px;top:395.5px;width:14px;height:14px"><rect x="1" y="1" width="12" height="12" rx="1.6" fill="none" stroke="#9c9c9c" stroke-width="1.5"/></svg>
<div style="left:888.3px;transform:scaleX(0.895);transform-origin:0 50%;top:393.4px;height:20px;line-height:20px;font-size:14px;color:#fff;font-weight:400;white-space:nowrap;-webkit-text-stroke:0.2px #fff;">All Channels</div>
<div style="left:766px;top:415px;width:200px;height:1px;background:#0b5279;"></div>
<div style="left:771px;top:420px;width:28px;height:28px;border:1px solid #0b5279;"></div>
<div style="left:485px;width:600px;text-align:center;transform:scaleX(0.9);transform-origin:50% 50%;top:424.6px;height:20px;line-height:20px;font-size:12.5px;color:#fff;font-weight:700;white-space:nowrap;">-12</div>
<div style="left:803px;top:420px;width:28px;height:28px;border:1px solid #0b5279;"></div>
<div style="left:517px;width:600px;text-align:center;transform:scaleX(0.9);transform-origin:50% 50%;top:424.6px;height:20px;line-height:20px;font-size:12.5px;color:#fff;font-weight:700;white-space:nowrap;">-1</div>
<div style="left:901px;top:420px;width:28px;height:28px;border:1px solid #0b5279;"></div>
<div style="left:615px;width:600px;text-align:center;transform:scaleX(0.9);transform-origin:50% 50%;top:424.6px;height:20px;line-height:20px;font-size:12.5px;color:#fff;font-weight:700;white-space:nowrap;">+1</div>
<div style="left:933px;top:420px;width:28px;height:28px;border:1px solid #0b5279;"></div>
<div style="left:647px;width:600px;text-align:center;transform:scaleX(0.9);transform-origin:50% 50%;top:424.6px;height:20px;line-height:20px;font-size:12.5px;color:#fff;font-weight:700;white-space:nowrap;">+12</div>
<div style="left:566px;width:600px;text-align:center;transform:scaleX(0.905);transform-origin:50% 50%;top:423.8px;height:20px;line-height:20px;font-size:13.5px;color:#fff;font-weight:400;white-space:nowrap;-webkit-text-stroke:0.2px #fff;">0</div>
<div style="left:766px;top:451px;width:200px;height:1px;background:#0b5279;"></div>
<div style="left:753px;top:465.9px;width:13px;height:9.2px;background:#22b14c;border:1px solid #0b5279;"></div>
<div style="left:966px;top:465.9px;width:13px;height:9.2px;background:#b5cfe8;border:1px solid #0b5279;"></div>
<div style="left:1079px;top:473px;width:200px;height:238px;background:#303030;border:1px solid #0b5279;"></div>
<div style="left:879.0px;width:600px;text-align:center;transform:scaleX(0.895);transform-origin:50% 50%;top:474.3px;height:20px;line-height:20px;font-size:14px;color:#fff;font-weight:400;white-space:nowrap;-webkit-text-stroke:0.2px #fff;">Organ</div>
<div style="left:1079px;top:498px;width:200px;height:1px;background:#0b5279;"></div>
<div style="left:1085px;top:507px;width:9px;height:9px;background:#22b14c;"></div>
<svg viewBox="0 0 14 14" style="left:1101px;top:504.5px;width:14px;height:14px"><rect x="0.25" y="0.25" width="13.5" height="13.5" rx="2" fill="#447aab"/><path d="M2.8,7.2L5.6,10L11.2,4.2" fill="none" stroke="#2c2c2c" stroke-width="1.6"/></svg>
<div style="left:1121.3px;transform:scaleX(0.895);transform-origin:0 50%;top:502.4px;height:20px;line-height:20px;font-size:14px;color:#fff;font-weight:400;white-space:nowrap;-webkit-text-stroke:0.2px #fff;">Enabled</div>
<svg viewBox="0 0 14 14" style="left:1181px;top:504.5px;width:14px;height:14px"><rect x="1" y="1" width="12" height="12" rx="1.6" fill="none" stroke="#9c9c9c" stroke-width="1.5"/></svg>
<div style="left:1201.3px;transform:scaleX(0.895);transform-origin:0 50%;top:502.4px;height:20px;line-height:20px;font-size:14px;color:#fff;font-weight:400;white-space:nowrap;-webkit-text-stroke:0.2px #fff;">All Channels</div>
<div style="left:1079px;top:524px;width:200px;height:1px;background:#0b5279;"></div>
<div style="left:1084px;top:529px;width:28px;height:28px;border:1px solid #0b5279;"></div>
<div style="left:798px;width:600px;text-align:center;transform:scaleX(0.9);transform-origin:50% 50%;top:533.6px;height:20px;line-height:20px;font-size:12.5px;color:#fff;font-weight:700;white-space:nowrap;">-12</div>
<div style="left:1116px;top:529px;width:28px;height:28px;border:1px solid #0b5279;"></div>
<div style="left:830px;width:600px;text-align:center;transform:scaleX(0.9);transform-origin:50% 50%;top:533.6px;height:20px;line-height:20px;font-size:12.5px;color:#fff;font-weight:700;white-space:nowrap;">-1</div>
<div style="left:1214px;top:529px;width:28px;height:28px;border:1px solid #0b5279;"></div>
<div style="left:928px;width:600px;text-align:center;transform:scaleX(0.9);transform-origin:50% 50%;top:533.6px;height:20px;line-height:20px;font-size:12.5px;color:#fff;font-weight:700;white-space:nowrap;">+1</div>
<div style="left:1246px;top:529px;width:28px;height:28px;border:1px solid #0b5279;"></div>
<div style="left:960px;width:600px;text-align:center;transform:scaleX(0.9);transform-origin:50% 50%;top:533.6px;height:20px;line-height:20px;font-size:12.5px;color:#fff;font-weight:700;white-space:nowrap;">+12</div>
<div style="left:879px;width:600px;text-align:center;transform:scaleX(0.905);transform-origin:50% 50%;top:532.8px;height:20px;line-height:20px;font-size:13.5px;color:#fff;font-weight:400;white-space:nowrap;-webkit-text-stroke:0.2px #fff;">0</div>
<div style="left:1079px;top:560px;width:200px;height:1px;background:#0b5279;"></div>
<div style="left:1066px;top:586.9px;width:13px;height:9.2px;background:#22b14c;border:1px solid #0b5279;"></div>
<div style="left:1279px;top:586.9px;width:13px;height:9.2px;background:#b5cfe8;border:1px solid #0b5279;"></div>
<div style="left:1367px;top:319px;width:150px;height:131px;background:#303030;border:1px solid #0b5279;"></div>
<div style="left:1142.0px;width:600px;text-align:center;transform:scaleX(0.895);transform-origin:50% 50%;top:320.3px;height:20px;line-height:20px;font-size:14px;color:#fff;font-weight:400;white-space:nowrap;-webkit-text-stroke:0.2px #fff;">Focusrite USB ASIO</div>
<div style="left:1367px;top:344px;width:150px;height:1px;background:#0b5279;"></div>
<svg viewBox="0 0 14 14" style="left:1419px;top:350.5px;width:14px;height:14px"><rect x="1" y="1" width="12" height="12" rx="1.6" fill="none" stroke="#9c9c9c" stroke-width="1.5"/></svg>
<div style="left:1439.3px;transform:scaleX(0.895);transform-origin:0 50%;top:348.4px;height:20px;line-height:20px;font-size:14px;color:#fff;font-weight:400;white-space:nowrap;-webkit-text-stroke:0.2px #fff;">All Channels</div>
<div style="left:1367px;top:370px;width:150px;height:1px;background:#0b5279;"></div>
<div style="left:1368px;top:371px;width:148px;height:78px;background:linear-gradient(#898989 0%,#858585 6%,#484848 52%,#000 91%,#000 100%);"></div>
<div style="left:1142.0px;width:600px;text-align:center;transform:scaleX(0.895);transform-origin:50% 50%;top:400.2px;height:20px;line-height:20px;font-size:14px;color:#fff;font-weight:400;white-space:nowrap;-webkit-text-stroke:0.2px #fff;">Audio Device</div>
<div style="left:1354px;top:379.9px;width:13px;height:9.2px;background:#b5cfe8;border:1px solid #0b5279;"></div>
<div style="left:737px;top:357px;width:7px;height:7px;background:#303030;border:1px solid #e8e8e8;"></div>
<div style="left:988px;top:357px;width:7px;height:7px;background:#303030;border:1px solid #e8e8e8;"></div>
<div style="left:737px;top:577px;width:7px;height:7px;background:#303030;border:1px solid #e8e8e8;"></div>
<div style="left:988px;top:577px;width:7px;height:7px;background:#303030;border:1px solid #e8e8e8;"></div>
<svg viewBox="698 217 198 128" style="left:698px;top:217px;width:198px;height:128px" font-family="Liberation Sans, sans-serif"><defs>
<radialGradient id="pHall" cx="0.5" cy="0.4" r="0.7"><stop offset="0" stop-color="#c07a38"/><stop offset="0.5" stop-color="#8a4c20"/><stop offset="1" stop-color="#33190a"/></radialGradient>
<linearGradient id="pFloor" x1="0" y1="0" x2="0" y2="1"><stop offset="0" stop-color="#c89a62"/><stop offset="0.5" stop-color="#e4bc88"/><stop offset="1" stop-color="#dcae78"/></linearGradient>
<linearGradient id="pCop" x1="0" y1="0" x2="0" y2="1"><stop offset="0" stop-color="#6a4330"/><stop offset="0.5" stop-color="#8c6044"/><stop offset="1" stop-color="#7a5238"/></linearGradient>
<linearGradient id="pCop2" x1="0" y1="0" x2="0" y2="1"><stop offset="0" stop-color="#7a4c30"/><stop offset="0.45" stop-color="#bc8656"/><stop offset="1" stop-color="#a8763e"/></linearGradient>
<linearGradient id="pVL" x1="0" y1="0" x2="1" y2="0"><stop offset="0" stop-color="#241206" stop-opacity="0.75"/><stop offset="1" stop-color="#241206" stop-opacity="0"/></linearGradient><linearGradient id="pVR" x1="1" y1="0" x2="0" y2="0"><stop offset="0" stop-color="#241206" stop-opacity="0.75"/><stop offset="1" stop-color="#241206" stop-opacity="0"/></linearGradient><linearGradient id="pW" x1="0" y1="0" x2="1" y2="1"><stop offset="0" stop-color="#f4f4ee"/><stop offset="0.6" stop-color="#deded6"/><stop offset="1" stop-color="#b8b8b0"/></linearGradient>
<linearGradient id="pG" x1="0" y1="0" x2="1" y2="0"><stop offset="0" stop-color="#86b06e"/><stop offset="0.7" stop-color="#4f7f44"/><stop offset="1" stop-color="#3c6a38"/></linearGradient>
<linearGradient id="pB" x1="0" y1="0" x2="1" y2="0"><stop offset="0" stop-color="#1f4f74"/><stop offset="0.55" stop-color="#2a6a8c"/><stop offset="0.75" stop-color="#0c2038"/><stop offset="1" stop-color="#060c18"/></linearGradient>
<linearGradient id="pP" x1="0" y1="0" x2="1" y2="0"><stop offset="0" stop-color="#cc2a58"/><stop offset="1" stop-color="#a0184a"/></linearGradient>
</defs><rect x="698.00" y="217.00" width="198.00" height="128.00" fill="#1c1c1c" /><rect x="698.60" y="217.60" width="197.20" height="6.80" fill="#101010" /><text x="701.20" y="222.63" font-size="4.488" fill="#dcdcdc" font-weight="700" textLength="25.8" lengthAdjust="spacingAndGlyphs">KONTAKT</text><text x="729.47" y="222.63" font-size="4.488" fill="#8c8c8c" font-style="italic" textLength="11.4" lengthAdjust="spacingAndGlyphs">Player</text><text x="745.63" y="222.22" font-size="2.3337600000000003" fill="#8a8a8a" >FILE</text><text x="754.61" y="222.22" font-size="2.3337600000000003" fill="#8a8a8a" >LIBRARY</text><text x="768.07" y="222.22" font-size="2.3337600000000003" fill="#8a8a8a" >VIEW</text><text x="824.22" y="222.22" font-size="2.3337600000000003" fill="#8a8a8a" >SHOP</text><rect x="837.63" y="218.96" width="0.40" height="4.08" fill="#444" /><text x="839.60" y="220.73" font-size="1.8670080000000002" fill="#999" >♪ 0</text><text x="839.60" y="223.45" font-size="1.8670080000000002" fill="#999" >≡ 87.27M</text><text x="856.36" y="220.73" font-size="1.8670080000000002" fill="#999" >CPU 0%</text><text x="856.36" y="223.45" font-size="1.8670080000000002" fill="#999" >Disk 0%</text><rect x="878.45" y="219.30" width="0.70" height="3.40" fill="#777" /><path d="M887.8,222.768V219.436L891.5999999999999,222.768V219.436H893.8" fill="none" stroke="#aaa" stroke-width="0.7"/><rect x="698.60" y="224.60" width="64.40" height="116.60" fill="#1e1e1e" /><rect x="699.50" y="225.30" width="62.50" height="5.40" fill="#2e2e2e" /><rect x="700.00" y="225.80" width="14.00" height="4.40" fill="#444" /><rect x="699.50" y="231.40" width="62.50" height="4.80" fill="#2a2a2a" /><rect x="729.00" y="232.00" width="21.00" height="3.60" fill="#1a1a1a" stroke="#444" stroke-width="0.4"/><rect x="706.00" y="232.00" width="17.00" height="3.60" fill="#454545" /><rect x="751.50" y="232.00" width="9.50" height="3.60" fill="#4a4a4a" /><rect x="699.50" y="237.80" width="62.00" height="3.00" fill="#222" /><rect x="700.90" y="241.00" width="58.20" height="11.20" fill="url(#pW)" /><rect x="699.50" y="252.40" width="62.00" height="3.20" fill="#2b2b2b" /><rect x="726.00" y="253.30" width="8.00" height="1.20" fill="#555" /><rect x="699.50" y="257.80" width="62.00" height="3.00" fill="#222" /><rect x="700.90" y="261.00" width="58.20" height="11.20" fill="url(#pG)" /><rect x="699.50" y="272.40" width="62.00" height="3.20" fill="#2b2b2b" /><rect x="726.00" y="273.30" width="8.00" height="1.20" fill="#555" /><rect x="699.50" y="277.60" width="62.00" height="3.00" fill="#222" /><rect x="700.90" y="280.80" width="58.20" height="11.20" fill="url(#pW)" /><rect x="699.50" y="292.20" width="62.00" height="3.20" fill="#2b2b2b" /><rect x="726.00" y="293.10" width="8.00" height="1.20" fill="#555" /><rect x="699.50" y="297.40" width="62.00" height="3.00" fill="#222" /><rect x="700.90" y="300.60" width="58.20" height="11.20" fill="url(#pB)" /><rect x="699.50" y="312.00" width="62.00" height="3.20" fill="#2b2b2b" /><rect x="726.00" y="312.90" width="8.00" height="1.20" fill="#555" /><rect x="699.50" y="317.10" width="62.00" height="3.00" fill="#222" /><rect x="700.90" y="320.30" width="58.20" height="11.20" fill="url(#pP)" /><rect x="699.50" y="331.70" width="62.00" height="3.20" fill="#2b2b2b" /><rect x="726.00" y="332.60" width="8.00" height="1.20" fill="#555" /><path d="M742,261H759.1V271.5Z" fill="#f2f2f2"/><path d="M751,261.3L758.8,267M753.5,261.3L758.8,265.3M756,261.3L758.8,263.4" stroke="#222" stroke-width="0.9"/><text x="703.50" y="268.80" font-size="4.3" fill="#f4f4f4" font-weight="700" font-family="Liberation Serif, serif">MAVERICK</text><text x="704.00" y="247.30" font-size="3.2" fill="#8a8a84" letter-spacing="0.7">WOODWIND SOLO</text><text x="704.00" y="287.20" font-size="3.0" fill="#8a8a84" letter-spacing="0.5">WOODWIND ENSEMBLE</text><text x="706.50" y="308.80" font-size="5" fill="#e8eef2" font-weight="700">GIANT</text><rect x="727.00" y="301.50" width="5.00" height="8.00" fill="#8fb6c8" opacity="0.55"/><rect x="733.50" y="303.00" width="4.00" height="6.50" fill="#9cc0d0" opacity="0.45"/><text x="704.00" y="328.30" font-size="3.4" fill="#f6dfe6" font-weight="700" letter-spacing="0.4">SESSION</text><text x="728.00" y="328.30" font-size="3.3" fill="#f0c8d4" font-style="italic">STRINGS PRO 2</text><rect x="699.50" y="337.50" width="62.00" height="3.70" fill="#222" /><rect x="761.40" y="237.00" width="1.20" height="104.00" fill="#2f2f2f" /><rect x="761.40" y="238.00" width="1.20" height="12.00" fill="#5a5a5a" /><rect x="763.40" y="224.60" width="132.40" height="116.60" fill="#242424" /><rect x="764.30" y="225.20" width="131.00" height="5.80" fill="#2c2c2c" /><rect x="775.00" y="226.00" width="68.00" height="4.20" fill="#1a1a1a" /><text x="779.00" y="229.50" font-size="3" fill="#bbb" >New (default)</text><rect x="847.00" y="226.20" width="5.00" height="3.80" fill="#3c3c3c" /><rect x="853.60" y="226.20" width="5.00" height="3.80" fill="#3c3c3c" /><rect x="860.20" y="226.20" width="5.00" height="3.80" fill="#3c3c3c" /><rect x="866.80" y="226.20" width="5.00" height="3.80" fill="#3c3c3c" /><rect x="873.40" y="226.20" width="5.00" height="3.80" fill="#3c3c3c" /><rect x="880.00" y="226.20" width="5.00" height="3.80" fill="#3c3c3c" /><rect x="886.60" y="226.20" width="5.00" height="3.80" fill="#3c3c3c" /><rect x="764.30" y="231.80" width="128.20" height="14.00" fill="#a86432" /><rect x="764.30" y="231.80" width="128.20" height="1.20" fill="#d08a4a" /><rect x="774.60" y="233.30" width="69.60" height="11.00" fill="#3a3a3a" /><rect x="775.20" y="233.80" width="68.40" height="3.40" fill="#505050" /><text x="779.50" y="236.60" font-size="2.9" fill="#e8e8e8" font-weight="700">The Grandeur</text><rect x="775.20" y="237.60" width="68.40" height="3.00" fill="#444" /><rect x="775.20" y="241.00" width="68.40" height="3.00" fill="#3e3e3e" /><rect x="766.00" y="233.40" width="5.40" height="3.40" fill="#ddd" /><circle cx="768.80" cy="241.00" r="2.60" fill="none" stroke="#ddd" stroke-width="0.8"/><rect x="845.80" y="233.40" width="3.00" height="4.40" fill="#d8d8d8" /><rect x="845.80" y="239.60" width="3.00" height="4.40" fill="#d8d8d8" /><circle cx="854.80" cy="236.40" r="3.10" fill="#1a1a1a" /><circle cx="854.80" cy="236.40" r="2.10" fill="#f2f2f2" /><rect x="860.00" y="233.40" width="8.00" height="2.80" fill="#3a2a1e" /><rect x="860.00" y="237.00" width="8.00" height="2.80" fill="#3a2a1e" /><rect x="851.50" y="241.40" width="17.00" height="2.80" fill="#4a3a2c" /><rect x="870.50" y="233.40" width="17.50" height="3.20" fill="#5a5048" /><rect x="870.50" y="237.20" width="17.50" height="3.20" fill="#5a5048" /><rect x="870.50" y="241.40" width="17.50" height="2.80" fill="#4a3a2c" /><rect x="873.00" y="242.20" width="9.00" height="1.20" fill="#ddd" /><rect x="889.50" y="233.00" width="2.20" height="11.60" fill="#5a3418" /><rect x="764.30" y="246.00" width="128.20" height="95.20" fill="#6a3816" /><rect x="764.30" y="246.00" width="128.20" height="13.00" fill="#3a2210" /><path d="M764.3,246H892.5V250Q828,262.5 764.3,250Z" fill="#2c190b"/><path d="M764.3,250.5Q828,263 892.5,250.5" fill="none" stroke="#a07a48" stroke-width="1.4" opacity="0.8"/><path d="M764.3,254.5Q828,265 892.5,254.5" fill="none" stroke="#7a5228" stroke-width="1.2" opacity="0.8"/><rect x="764.30" y="258.40" width="128.20" height="9.80" fill="#4c2810" /><path d="M795,262.4H862" stroke="#d8b070" stroke-width="0.7" stroke-dasharray="0.6 2.2" opacity="0.8"/><path d="M795,265.4H862" stroke="#c89858" stroke-width="0.7" stroke-dasharray="0.6 1.8" opacity="0.7"/><rect x="794.60" y="268.20" width="67.60" height="4.40" fill="#b08a5a" /><path d="M796,270.2H861" stroke="#e6dccb" stroke-width="2" stroke-dasharray="5 1.2 9 1.4 14 1.2 12 1.4 8 1.2"/><rect x="794.60" y="272.60" width="67.60" height="8.00" fill="#783c14" /><path d="M800,276H858" stroke="#3a1c0a" stroke-width="1.4" stroke-dasharray="1.2 4.4" opacity="0.7"/><rect x="794.60" y="280.40" width="67.60" height="4.20" fill="#9a521a" /><path d="M796,282.6H861" stroke="#ffc040" stroke-width="2.4" stroke-dasharray="2.6 1.6"/><path d="M796,282.2H861" stroke="#fff0b0" stroke-width="0.9" stroke-dasharray="1.2 3"/><rect x="794.60" y="284.60" width="67.60" height="6.00" fill="#8a4a1a" /><path d="M794.6,290.6H862.2V313.4H794.6Z" fill="#8c7a5c"/><path d="M795,291.6H862" stroke="#5e4c34" stroke-width="0.8" opacity="0.75"/><path d="M795,294.4H862" stroke="#5e4c34" stroke-width="0.8" opacity="0.75"/><path d="M795,297.2H862" stroke="#5e4c34" stroke-width="0.8" opacity="0.75"/><path d="M795,300.0H862" stroke="#5e4c34" stroke-width="0.8" opacity="0.75"/><path d="M795,302.8H862" stroke="#5e4c34" stroke-width="0.8" opacity="0.75"/><path d="M795,305.6H862" stroke="#5e4c34" stroke-width="0.8" opacity="0.75"/><path d="M795,308.4H862" stroke="#5e4c34" stroke-width="0.8" opacity="0.75"/><path d="M795,311.2H862" stroke="#5e4c34" stroke-width="0.8" opacity="0.75"/><path d="M808,290.6L802,313.4H806L811.4,290.6Z" fill="#8c4c1e"/><path d="M846.6,290.6L852.4,313.4H856.4L850,290.6Z" fill="#8c4c1e"/><rect x="794.60" y="313.00" width="67.60" height="28.20" fill="url(#pFloor)" /><ellipse cx="826" cy="329" rx="26" ry="9" fill="#f6e2c0" opacity="0.3"/><rect x="764.30" y="258.40" width="30.30" height="82.80" fill="#55300f" /><rect x="862.20" y="258.40" width="30.30" height="82.80" fill="#55300f" /><path d="M816.8,293.6L838.9,274L845.6,275.4L853,286.4L847,300H819Z" fill="#18100a"/><path d="M824,292L838.6,278.4L846,286L836,296Z" fill="#3e2e16" opacity="0.8"/><path d="M801.4,305.6L816.8,298.2L842,297L856.4,299.4L856.8,305.6L833.4,311.6L803.4,310.4Z" fill="#0a0806"/><path d="M804.4,308L829.4,310.4" stroke="#e8e4da" stroke-width="1"/><rect x="811.30" y="311.00" width="1.60" height="16.00" fill="#0c0a08" /><rect x="837.20" y="311.40" width="1.80" height="19.40" fill="#0c0a08" /><rect x="847.90" y="306.00" width="1.40" height="14.40" fill="#0c0a08" /><rect x="822.60" y="311.40" width="0.90" height="13.00" fill="#1a1410" /><rect x="824.80" y="311.40" width="0.90" height="13.00" fill="#1a1410" /><circle cx="812.10" cy="327.60" r="1.00" fill="#0c0a08" /><circle cx="838.10" cy="331.00" r="1.10" fill="#0c0a08" /><circle cx="848.60" cy="320.60" r="0.90" fill="#0c0a08" /><path d="M799,316.8H809.2V321H799Z" fill="#120e0a"/><rect x="799.40" y="321.00" width="1.00" height="13.40" fill="#120e0a" /><rect x="807.80" y="321.00" width="1.00" height="13.40" fill="#120e0a" /><rect x="802.00" y="321.00" width="0.80" height="10.60" fill="#1a1410" /><rect x="805.60" y="321.00" width="0.80" height="10.60" fill="#1a1410" /><ellipse cx="830" cy="332.4" rx="20" ry="2.6" fill="#7a5430" opacity="0.3"/><text x="801.40" y="255.00" font-size="5.2" fill="#f4efe6" font-family="Liberation Serif, serif" font-weight="700" textLength="13.4" lengthAdjust="spacingAndGlyphs">THE</text><text x="815.00" y="255.80" font-size="9.6" fill="#f4efe6" font-family="Liberation Serif, serif">G</text><text x="822.00" y="255.00" font-size="5.6" fill="#f4efe6" font-family="Liberation Serif, serif" font-weight="700" textLength="34.4" lengthAdjust="spacingAndGlyphs">RANDEUR</text><rect x="767.60" y="259.80" width="25.60" height="36.60" fill="#3a2416" /><rect x="768.20" y="260.40" width="24.40" height="35.40" fill="url(#pCop)" /><rect x="768.20" y="260.40" width="24.40" height="3.20" fill="#0e0e0e" /><text x="780.40" y="263.00" font-size="2.4" fill="#ddd" text-anchor="middle">TONE</text><circle cx="780.40" cy="273.00" r="4.40" fill="#3a2a1c" opacity="0.6"/><circle cx="780.40" cy="273.00" r="3.90" fill="#17130f" /><circle cx="779.80" cy="272.20" r="2.15" fill="#3c3630" /><rect x="780.15" y="269.50" width="0.50" height="1.60" fill="#ddd" /><rect x="776.60" y="284.00" width="7.60" height="5.60" fill="#e8e8e8" /><rect x="778.00" y="286.40" width="4.80" height="2.20" fill="#555" /><rect x="776.00" y="279.20" width="9.00" height="0.90" fill="#d8c0a0" opacity="0.7"/><rect x="778.50" y="291.60" width="4.00" height="0.80" fill="#d8c0a0" opacity="0.6"/><rect x="767.60" y="299.70" width="25.60" height="42.10" fill="#3a2416" /><rect x="768.20" y="300.30" width="24.40" height="40.90" fill="url(#pCop2)" /><rect x="768.20" y="300.30" width="24.40" height="3.20" fill="#0e0e0e" /><text x="780.40" y="302.90" font-size="2.4" fill="#ddd" text-anchor="middle">ANATOMY</text><circle cx="780.40" cy="312.60" r="4.40" fill="#3a2a1c" opacity="0.6"/><circle cx="780.40" cy="312.60" r="3.90" fill="#17130f" /><circle cx="779.80" cy="311.80" r="2.15" fill="#3c3630" /><rect x="780.15" y="309.10" width="0.50" height="1.60" fill="#ddd" /><circle cx="780.40" cy="329.30" r="4.40" fill="#3a2a1c" opacity="0.6"/><circle cx="780.40" cy="329.30" r="3.90" fill="#17130f" /><circle cx="779.80" cy="328.50" r="2.15" fill="#3c3630" /><rect x="780.15" y="325.80" width="0.50" height="1.60" fill="#ddd" /><rect x="771.50" y="318.60" width="18.00" height="0.90" fill="#e8d0b0" opacity="0.7"/><rect x="772.50" y="335.20" width="16.00" height="0.90" fill="#e8d0b0" opacity="0.7"/><rect x="862.90" y="259.80" width="26.30" height="82.00" fill="#3a2416" /><rect x="863.50" y="260.40" width="25.10" height="80.80" fill="url(#pCop2)" /><rect x="863.50" y="260.40" width="25.10" height="3.20" fill="#0e0e0e" /><text x="876.05" y="263.00" font-size="2.4" fill="#ddd" text-anchor="middle">SPACE</text><circle cx="876.00" cy="272.60" r="4.40" fill="#3a2a1c" opacity="0.6"/><circle cx="876.00" cy="272.60" r="3.90" fill="#17130f" /><circle cx="875.40" cy="271.80" r="2.15" fill="#3c3630" /><rect x="875.75" y="269.10" width="0.50" height="1.60" fill="#ddd" /><circle cx="876.00" cy="292.60" r="4.40" fill="#3a2a1c" opacity="0.6"/><circle cx="876.00" cy="292.60" r="3.90" fill="#17130f" /><circle cx="875.40" cy="291.80" r="2.15" fill="#3c3630" /><rect x="875.75" y="289.10" width="0.50" height="1.60" fill="#ddd" /><circle cx="876.00" cy="312.60" r="4.40" fill="#3a2a1c" opacity="0.6"/><circle cx="876.00" cy="312.60" r="3.90" fill="#17130f" /><circle cx="875.40" cy="311.80" r="2.15" fill="#3c3630" /><rect x="875.75" y="309.10" width="0.50" height="1.60" fill="#ddd" /><rect x="871.00" y="279.00" width="10.00" height="0.90" fill="#e8d0b0" opacity="0.7"/><rect x="872.50" y="299.00" width="7.00" height="0.90" fill="#e8d0b0" opacity="0.7"/><rect x="870.50" y="319.00" width="11.00" height="0.90" fill="#e8d0b0" opacity="0.7"/><rect x="865.20" y="323.00" width="21.60" height="14.70" fill="#c87a34" /><rect x="865.20" y="323.00" width="21.60" height="3.00" fill="#8a4a1c" /><rect x="865.20" y="329.00" width="21.60" height="1.40" fill="#f0c080" /><rect x="865.20" y="333.00" width="21.60" height="4.70" fill="#e0a868" /><rect x="865.20" y="338.00" width="21.60" height="2.60" fill="#1a2a3c" /><rect x="892.50" y="231.80" width="3.30" height="109.40" fill="#2a2a2a" /><rect x="893.20" y="233.00" width="1.80" height="74.00" fill="#4a4a4a" /><rect x="698.60" y="341.20" width="197.20" height="3.60" fill="#3a3a3a" /><rect x="700.00" y="342.00" width="194.00" height="2.00" fill="#585858" /></svg><svg viewBox="1059 233 198 64" style="left:1059px;top:233px;width:198px;height:64px" font-family="Liberation Sans, sans-serif"><defs>
<linearGradient id="eBody" x1="0" y1="0" x2="0" y2="1"><stop offset="0" stop-color="#c6c6c6"/><stop offset="0.3" stop-color="#dedede"/><stop offset="0.7" stop-color="#d0d0d0"/><stop offset="1" stop-color="#a8a8a8"/></linearGradient>
<linearGradient id="eSide" x1="0" y1="0" x2="0" y2="1"><stop offset="0" stop-color="#bcbcbc"/><stop offset="0.4" stop-color="#cfcfcf"/><stop offset="1" stop-color="#a2a2a2"/></linearGradient>
<linearGradient id="eTop" x1="0" y1="0" x2="0" y2="1"><stop offset="0" stop-color="#262626"/><stop offset="1" stop-color="#3c3c3c"/></linearGradient>
<radialGradient id="eKnob" cx="0.42" cy="0.35" r="0.7"><stop offset="0" stop-color="#ffffff"/><stop offset="0.6" stop-color="#e6e6e6"/><stop offset="1" stop-color="#9c9c9c"/></radialGradient>
</defs><rect x="1059.20" y="233.90" width="197.70" height="7.00" fill="url(#eTop)" /><text x="1157.00" y="239.20" font-size="3.4" fill="#aaa" text-anchor="middle">Piano</text><text x="1134.00" y="239.20" font-size="3.4" fill="#999" >‹ ›</text><text x="1186.00" y="239.20" font-size="3" fill="#888" >A → B</text><rect x="1061.50" y="236.60" width="1.60" height="1.60" fill="#777" /><path d="M1249,239.4V235.4L1254.6,239.4V235.4H1256" fill="none" stroke="#f4f4f4" stroke-width="1"/><rect x="1059.20" y="240.90" width="197.70" height="55.60" fill="url(#eBody)" /><rect x="1059.20" y="240.90" width="27.40" height="55.60" fill="url(#eSide)" /><rect x="1228.20" y="240.90" width="28.70" height="55.60" fill="url(#eSide)" /><rect x="1059.20" y="240.90" width="2.60" height="55.60" fill="#4a4a4a" /><rect x="1254.20" y="240.90" width="2.70" height="55.60" fill="#4a4a4a" /><rect x="1086.30" y="240.90" width="0.70" height="55.60" fill="#9a9a9a" /><rect x="1228.00" y="240.90" width="0.70" height="55.60" fill="#9a9a9a" /><rect x="1059.20" y="240.90" width="197.70" height="0.80" fill="#eee" /><rect x="1059.20" y="295.60" width="197.70" height="0.90" fill="#555" /><circle cx="1109.60" cy="259.90" r="6.80" fill="#707070" opacity="0.35"/><circle cx="1109.60" cy="259.10" r="6.80" fill="none" stroke="#7a7a7a" stroke-width="0.9" stroke-dasharray="0.9 0.7" opacity="0.9"/><circle cx="1109.60" cy="259.10" r="5.30" fill="url(#eKnob)" stroke="#8a8a8a" stroke-width="0.4"/><text x="1109.60" y="248.90" font-size="3.2" fill="#444" text-anchor="middle">LF</text><text x="1109.60" y="270.40" font-size="2.4" fill="#444" text-anchor="middle">0.0 dB</text><circle cx="1133.00" cy="259.90" r="6.80" fill="#707070" opacity="0.35"/><circle cx="1133.00" cy="259.10" r="6.80" fill="none" stroke="#4f7fd6" stroke-width="0.9" stroke-dasharray="0.9 0.7" opacity="0.9"/><circle cx="1133.00" cy="259.10" r="5.30" fill="url(#eKnob)" stroke="#8a8a8a" stroke-width="0.4"/><text x="1133.00" y="248.90" font-size="3.2" fill="#4f7fd6" text-anchor="middle">LMF</text><text x="1133.00" y="270.40" font-size="2.4" fill="#4f7fd6" text-anchor="middle">0.0 dB</text><circle cx="1182.60" cy="259.90" r="6.80" fill="#707070" opacity="0.35"/><circle cx="1182.60" cy="259.10" r="6.80" fill="none" stroke="#e24c4c" stroke-width="0.9" stroke-dasharray="0.9 0.7" opacity="0.9"/><circle cx="1182.60" cy="259.10" r="5.30" fill="url(#eKnob)" stroke="#8a8a8a" stroke-width="0.4"/><text x="1182.60" y="248.90" font-size="3.2" fill="#e24c4c" text-anchor="middle">HMF</text><text x="1182.60" y="270.40" font-size="2.4" fill="#e24c4c" text-anchor="middle">0.0 dB</text><circle cx="1206.80" cy="259.90" r="6.80" fill="#707070" opacity="0.35"/><circle cx="1206.80" cy="259.10" r="6.80" fill="none" stroke="#7a7a7a" stroke-width="0.9" stroke-dasharray="0.9 0.7" opacity="0.9"/><circle cx="1206.80" cy="259.10" r="5.30" fill="url(#eKnob)" stroke="#8a8a8a" stroke-width="0.4"/><text x="1206.80" y="248.90" font-size="3.2" fill="#444" text-anchor="middle">HF</text><text x="1206.80" y="270.40" font-size="2.4" fill="#444" text-anchor="middle">0.0 dB</text><circle cx="1109.90" cy="256.00" r="0.50" fill="#555" /><circle cx="1132.40" cy="256.20" r="0.55" fill="#4f7fd6" /><circle cx="1183.00" cy="256.20" r="0.55" fill="#e24c4c" /><circle cx="1207.60" cy="256.40" r="0.50" fill="#333" /><circle cx="1097.30" cy="281.40" r="6.80" fill="#707070" opacity="0.35"/><circle cx="1097.30" cy="280.60" r="6.80" fill="none" stroke="#7a7a7a" stroke-width="0.9" stroke-dasharray="0.9 0.7" opacity="0.9"/><circle cx="1097.30" cy="280.60" r="5.30" fill="url(#eKnob)" stroke="#8a8a8a" stroke-width="0.4"/><circle cx="1121.50" cy="281.40" r="6.80" fill="#707070" opacity="0.35"/><circle cx="1121.50" cy="280.60" r="6.80" fill="none" stroke="#4f7fd6" stroke-width="0.9" stroke-dasharray="0.9 0.7" opacity="0.9"/><circle cx="1121.50" cy="280.60" r="5.30" fill="url(#eKnob)" stroke="#8a8a8a" stroke-width="0.4"/><circle cx="1145.00" cy="281.40" r="6.80" fill="#707070" opacity="0.35"/><circle cx="1145.00" cy="280.60" r="6.80" fill="none" stroke="#4f7fd6" stroke-width="0.9" stroke-dasharray="0.9 0.7" opacity="0.9"/><circle cx="1145.00" cy="280.60" r="5.30" fill="url(#eKnob)" stroke="#8a8a8a" stroke-width="0.4"/><circle cx="1170.80" cy="281.40" r="6.80" fill="#707070" opacity="0.35"/><circle cx="1170.80" cy="280.60" r="6.80" fill="none" stroke="#e24c4c" stroke-width="0.9" stroke-dasharray="0.9 0.7" opacity="0.9"/><circle cx="1170.80" cy="280.60" r="5.30" fill="url(#eKnob)" stroke="#8a8a8a" stroke-width="0.4"/><circle cx="1194.60" cy="281.40" r="6.80" fill="#707070" opacity="0.35"/><circle cx="1194.60" cy="280.60" r="6.80" fill="none" stroke="#e24c4c" stroke-width="0.9" stroke-dasharray="0.9 0.7" opacity="0.9"/><circle cx="1194.60" cy="280.60" r="5.30" fill="url(#eKnob)" stroke="#8a8a8a" stroke-width="0.4"/><circle cx="1218.60" cy="281.40" r="6.80" fill="#707070" opacity="0.35"/><circle cx="1218.60" cy="280.60" r="6.80" fill="none" stroke="#7a7a7a" stroke-width="0.9" stroke-dasharray="0.9 0.7" opacity="0.9"/><circle cx="1218.60" cy="280.60" r="5.30" fill="url(#eKnob)" stroke="#8a8a8a" stroke-width="0.4"/><circle cx="1074.80" cy="281.40" r="5.70" fill="#707070" opacity="0.35"/><circle cx="1074.80" cy="280.60" r="5.70" fill="none" stroke="#7a7a7a" stroke-width="0.9" stroke-dasharray="0.9 0.7" opacity="0.9"/><circle cx="1074.80" cy="280.60" r="4.20" fill="url(#eKnob)" stroke="#8a8a8a" stroke-width="0.4"/><circle cx="1241.00" cy="281.40" r="5.70" fill="#707070" opacity="0.35"/><circle cx="1241.00" cy="280.60" r="5.70" fill="none" stroke="#7a7a7a" stroke-width="0.9" stroke-dasharray="0.9 0.7" opacity="0.9"/><circle cx="1241.00" cy="280.60" r="4.20" fill="url(#eKnob)" stroke="#8a8a8a" stroke-width="0.4"/><circle cx="1095.40" cy="278.40" r="0.70" fill="#222" /><circle cx="1118.80" cy="282.50" r="0.55" fill="#4f7fd6" /><circle cx="1145.60" cy="277.60" r="0.60" fill="#4f7fd6" /><circle cx="1170.80" cy="277.60" r="0.60" fill="#e24c4c" /><circle cx="1192.00" cy="280.20" r="0.60" fill="#e24c4c" /><circle cx="1218.20" cy="277.60" r="0.55" fill="#444" /><circle cx="1073.20" cy="283.00" r="0.70" fill="#222" /><circle cx="1240.40" cy="283.60" r="0.70" fill="#222" /><text x="1157.50" y="249.40" font-size="3.9" fill="#4a4a4a" text-anchor="middle" textLength="23" lengthAdjust="spacingAndGlyphs">SOLID EQ</text><text x="1075.00" y="248.90" font-size="3" fill="#444" text-anchor="middle">HPF</text><text x="1241.00" y="248.90" font-size="3" fill="#444" text-anchor="middle">LPF</text><rect x="1154.00" y="257.60" width="5.60" height="2.60" fill="#f4f4f4" stroke="#888" stroke-width="0.3"/><text x="1075.00" y="292.40" font-size="2.4" fill="#555" text-anchor="middle">24 Hz</text><text x="1097.30" y="292.40" font-size="2.4" fill="#555" text-anchor="middle">100 Hz</text><text x="1121.50" y="292.40" font-size="2.4" fill="#4f7fd6" text-anchor="middle">150 Hz</text><text x="1194.60" y="292.40" font-size="2.4" fill="#e24c4c" text-anchor="middle">1000 Hz</text><text x="1218.60" y="292.40" font-size="2.4" fill="#555" text-anchor="middle">5.0 kHz</text><text x="1241.00" y="292.40" font-size="2.4" fill="#555" text-anchor="middle">OFF</text><path d="M1141.5,291.8L1145,289.6L1148.5,291.8" fill="none" stroke="#4f7fd6" stroke-width="0.6"/><path d="M1167.3,291.8L1170.8,289.6L1174.3,291.8" fill="none" stroke="#e24c4c" stroke-width="0.6"/><path d="M1094.4,253.5l1.2,-1.8l1.2,1.8M1094.4,264.5l1.2,1.8l1.2,-1.8" fill="none" stroke="#555" stroke-width="0.5"/><circle cx="1095.60" cy="260.00" r="0.60" fill="#222" /><path d="M1220.4,253.5l1.2,-1.8l1.2,1.8M1220.4,264.5l1.2,1.8l1.2,-1.8" fill="none" stroke="#555" stroke-width="0.5"/><circle cx="1221.60" cy="260.00" r="0.60" fill="#222" /></svg><svg viewBox="767 452 198 124" style="left:767px;top:452px;width:198px;height:124px" font-family="Liberation Sans, sans-serif"><defs>
<linearGradient id="aSky" x1="0" y1="0" x2="0" y2="1"><stop offset="0" stop-color="#2a143c"/><stop offset="0.3" stop-color="#48195c"/><stop offset="0.55" stop-color="#7a2478"/><stop offset="0.8" stop-color="#b83290"/><stop offset="1" stop-color="#c8388c"/></linearGradient><radialGradient id="aPinkL" cx="0.5" cy="0.5" r="0.5"><stop offset="0" stop-color="#f840a8" stop-opacity="0.95"/><stop offset="0.55" stop-color="#e838a0" stop-opacity="0.5"/><stop offset="1" stop-color="#c030a0" stop-opacity="0"/></radialGradient><radialGradient id="aRedR" cx="0.5" cy="0.5" r="0.5"><stop offset="0" stop-color="#f03c64" stop-opacity="0.95"/><stop offset="0.55" stop-color="#e03880" stop-opacity="0.5"/><stop offset="1" stop-color="#b03090" stop-opacity="0"/></radialGradient>
<radialGradient id="aGlow" cx="0.5" cy="0.5" r="0.5"><stop offset="0" stop-color="#ff7a50" stop-opacity="0.95"/><stop offset="0.35" stop-color="#f04878" stop-opacity="0.8"/><stop offset="0.7" stop-color="#e040a0" stop-opacity="0.35"/><stop offset="1" stop-color="#c030a0" stop-opacity="0"/></radialGradient>
<linearGradient id="aSun" x1="0" y1="0" x2="0" y2="1"><stop offset="0" stop-color="#ffd23c"/><stop offset="0.45" stop-color="#ffa23c"/><stop offset="1" stop-color="#f0506c"/></linearGradient>
<linearGradient id="aMtnV" x1="0" y1="0" x2="0" y2="1"><stop offset="0" stop-color="#e858e0"/><stop offset="0.35" stop-color="#b040dc"/><stop offset="0.7" stop-color="#6a30b8"/><stop offset="1" stop-color="#34186a"/></linearGradient><linearGradient id="aFade" x1="0" y1="0" x2="0" y2="1"><stop offset="0" stop-color="#2a1650" stop-opacity="0"/><stop offset="1" stop-color="#2a1650" stop-opacity="0.95"/></linearGradient>
<linearGradient id="aMtnH" x1="0" y1="0" x2="1" y2="0"><stop offset="0" stop-color="#4838c0" stop-opacity="0.75"/><stop offset="0.3" stop-color="#6030c8" stop-opacity="0.2"/><stop offset="0.5" stop-color="#ff60e0" stop-opacity="0.2"/><stop offset="0.72" stop-color="#5030c8" stop-opacity="0.25"/><stop offset="1" stop-color="#4038c0" stop-opacity="0.75"/></linearGradient>
<linearGradient id="aBot" x1="0" y1="0" x2="0" y2="1"><stop offset="0" stop-color="#2a1850"/><stop offset="0.4" stop-color="#2a1a4a"/><stop offset="1" stop-color="#1e1232"/></linearGradient>
<pattern id="aGrid" width="2.2" height="2.2" patternUnits="userSpaceOnUse"><path d="M0,0H2.2M0,0V2.2" stroke="#f0a0ff" stroke-width="0.35" opacity="0.5"/></pattern>
</defs><rect x="767.00" y="452.00" width="198.00" height="124.00" fill="#161616" /><rect x="767.60" y="452.90" width="197.20" height="7.00" fill="#101010" /><text x="770.20" y="458.08" font-size="4.62" fill="#dcdcdc" font-weight="700" textLength="26.6" lengthAdjust="spacingAndGlyphs">KONTAKT</text><text x="799.31" y="458.08" font-size="4.62" fill="#8c8c8c" font-style="italic" textLength="11.8" lengthAdjust="spacingAndGlyphs">Player</text><text x="815.94" y="457.66" font-size="2.4024" fill="#8a8a8a" >FILE</text><text x="825.18" y="457.66" font-size="2.4024" fill="#8a8a8a" >LIBRARY</text><text x="839.04" y="457.66" font-size="2.4024" fill="#8a8a8a" >VIEW</text><text x="893.22" y="457.66" font-size="2.4024" fill="#8a8a8a" >SHOP</text><rect x="906.63" y="454.30" width="0.40" height="4.20" fill="#444" /><text x="908.60" y="456.12" font-size="1.92192" fill="#999" >♪ 0</text><text x="908.60" y="458.92" font-size="1.92192" fill="#999" >≡ 87.27M</text><text x="925.36" y="456.12" font-size="1.92192" fill="#999" >CPU 0%</text><text x="925.36" y="458.92" font-size="1.92192" fill="#999" >Disk 0%</text><rect x="947.45" y="454.65" width="0.70" height="3.50" fill="#777" /><path d="M956.8,458.21999999999997V454.78999999999996L960.5999999999999,458.21999999999997V454.78999999999996H962.8" fill="none" stroke="#aaa" stroke-width="0.7"/><rect x="767.60" y="460.20" width="197.20" height="14.40" fill="#2a2a2a" /><rect x="767.80" y="460.60" width="1.60" height="13.60" fill="#c87030" /><rect x="778.80" y="461.60" width="137.20" height="5.40" fill="#505050" /><rect x="778.80" y="467.20" width="137.20" height="5.20" fill="#3e3e3e" /><rect x="778.80" y="472.40" width="137.20" height="1.40" fill="#333" /><text x="783.00" y="465.80" font-size="3.1" fill="#eee" font-weight="700">Analog Dreams</text><text x="783.00" y="471.30" font-size="2.9" fill="#ccc" >Nostalgia</text><rect x="770.00" y="461.40" width="6.40" height="3.60" fill="#ddd" /><circle cx="773.20" cy="469.80" r="2.70" fill="none" stroke="#ddd" stroke-width="0.8"/><rect x="906.00" y="462.40" width="4.60" height="3.00" fill="#ddd" /><rect x="912.40" y="462.40" width="2.80" height="3.00" fill="#999" /><rect x="906.00" y="470.00" width="9.60" height="1.50" fill="#ddd" /><rect x="918.40" y="461.80" width="3.00" height="4.40" fill="#d8d8d8" /><rect x="918.40" y="468.60" width="3.00" height="4.40" fill="#d8d8d8" /><circle cx="926.60" cy="465.20" r="3.10" fill="#111" /><circle cx="926.60" cy="465.20" r="2.10" fill="#f2f2f2" /><rect x="931.50" y="462.00" width="8.00" height="2.60" fill="#1c1c1c" /><rect x="931.50" y="465.60" width="8.00" height="2.60" fill="#1c1c1c" /><rect x="923.50" y="470.60" width="16.50" height="2.40" fill="#383838" /><rect x="942.50" y="462.00" width="16.00" height="6.40" fill="#4e4e4e" /><rect x="942.50" y="470.60" width="16.50" height="2.40" fill="#383838" /><rect x="945.00" y="471.20" width="9.00" height="1.10" fill="#ddd" /><rect x="961.00" y="461.80" width="2.60" height="12.00" fill="#222" /><rect x="767.60" y="474.60" width="197.20" height="81.00" fill="url(#aSky)" /><ellipse cx="814" cy="522" rx="60" ry="26" fill="url(#aPinkL)"/><ellipse cx="916" cy="518" rx="58" ry="25" fill="url(#aRedR)"/><ellipse cx="866" cy="521" rx="72" ry="31" fill="url(#aGlow)"/><path d="M845.3,533A20.7,20.7 0 0 1 886.7,533Z" fill="url(#aSun)"/><path d="M767.6,534L774,531L783,527.6L790,527L797,529.6L806,532L814,529L822,526.6L832,526L842,528.6L850,531L858,528L866,526L874,526.6L882,529L890,527L898,526.4L906,528.4L914,531.6L922,529L930,527L940,526.6L950,528.6L958,532L964.8,535.6V556H767.6Z" fill="url(#aMtnV)"/><path d="M767.6,534L774,531L783,527.6L790,527L797,529.6L806,532L814,529L822,526.6L832,526L842,528.6L850,531L858,528L866,526L874,526.6L882,529L890,527L898,526.4L906,528.4L914,531.6L922,529L930,527L940,526.6L950,528.6L958,532L964.8,535.6V556H767.6Z" fill="url(#aGrid)"/><path d="M767.6,534L774,531L783,527.6L790,527L797,529.6L806,532L814,529L822,526.6L832,526L842,528.6L850,531L858,528L866,526L874,526.6L882,529L890,527L898,526.4L906,528.4L914,531.6L922,529L930,527L940,526.6L950,528.6L958,532L964.8,535.6V556H767.6Z" fill="url(#aMtnH)"/><rect x="767.60" y="540.00" width="197.20" height="16.00" fill="url(#aFade)" /><rect x="767.60" y="555.00" width="197.20" height="20.60" fill="url(#aBot)" /><circle cx="796.20" cy="564.20" r="4.10" fill="#3a2050" /><circle cx="796.20" cy="564.20" r="3.40" fill="#150a1e" /><rect x="795.90" y="561.00" width="0.60" height="1.60" fill="#c060a0" /><rect x="791.70" y="570.40" width="9.00" height="0.90" fill="#8a5aa0" opacity="0.8"/><circle cx="826.50" cy="564.20" r="4.10" fill="#3a2050" /><circle cx="826.50" cy="564.20" r="3.40" fill="#150a1e" /><rect x="826.20" y="561.00" width="0.60" height="1.60" fill="#c060a0" /><rect x="822.00" y="570.40" width="9.00" height="0.90" fill="#8a5aa0" opacity="0.8"/><circle cx="841.30" cy="564.20" r="4.10" fill="#3a2050" /><circle cx="841.30" cy="564.20" r="3.40" fill="#150a1e" /><rect x="841.00" y="561.00" width="0.60" height="1.60" fill="#c060a0" /><rect x="836.80" y="570.40" width="9.00" height="0.90" fill="#8a5aa0" opacity="0.8"/><circle cx="856.80" cy="564.20" r="4.10" fill="#3a2050" /><circle cx="856.80" cy="564.20" r="3.40" fill="#150a1e" /><rect x="856.50" y="561.00" width="0.60" height="1.60" fill="#c060a0" /><rect x="852.30" y="570.40" width="9.00" height="0.90" fill="#8a5aa0" opacity="0.8"/><circle cx="871.60" cy="564.20" r="4.10" fill="#3a2050" /><circle cx="871.60" cy="564.20" r="3.40" fill="#150a1e" /><rect x="871.30" y="561.00" width="0.60" height="1.60" fill="#c060a0" /><rect x="867.10" y="570.40" width="9.00" height="0.90" fill="#8a5aa0" opacity="0.8"/><circle cx="886.70" cy="564.20" r="4.10" fill="#3a2050" /><circle cx="886.70" cy="564.20" r="3.40" fill="#150a1e" /><rect x="886.40" y="561.00" width="0.60" height="1.60" fill="#c060a0" /><rect x="882.20" y="570.40" width="9.00" height="0.90" fill="#8a5aa0" opacity="0.8"/><circle cx="901.90" cy="564.20" r="4.10" fill="#3a2050" /><circle cx="901.90" cy="564.20" r="3.40" fill="#150a1e" /><rect x="901.60" y="561.00" width="0.60" height="1.60" fill="#c060a0" /><rect x="897.40" y="570.40" width="9.00" height="0.90" fill="#8a5aa0" opacity="0.8"/><circle cx="932.20" cy="564.20" r="4.10" fill="#3a2050" /><circle cx="932.20" cy="564.20" r="3.40" fill="#150a1e" /><rect x="931.90" y="561.00" width="0.60" height="1.60" fill="#c060a0" /><rect x="927.70" y="570.40" width="9.00" height="0.90" fill="#8a5aa0" opacity="0.8"/><text x="780.60" y="515.20" font-size="13" fill="#f45cc4" font-weight="700" stroke="#f45cc4" stroke-width="0.7">A</text><text x="943.60" y="515.20" font-size="13" fill="#c8407c" font-weight="700" stroke="#c8407c" stroke-width="0.7">B</text><rect x="793.90" y="510.90" width="29.00" height="2.00" fill="#f8e0f0" /><rect x="912.00" y="511.00" width="28.50" height="1.80" fill="#e8a0b0" opacity="0.8"/><text x="794.00" y="507.60" font-size="2.4" fill="#e8d0e8" >Soft Analogue</text><text x="940.00" y="507.60" font-size="2.4" fill="#e8b0c0" text-anchor="end">Cinematic</text><text x="866.50" y="484.40" font-size="5.8" fill="#fff" font-weight="700" text-anchor="middle" textLength="25.5" lengthAdjust="spacingAndGlyphs" stroke="#fff" stroke-width="0.35">ANALOG</text><rect x="852.50" y="485.80" width="27.50" height="0.50" fill="#ddd" /><text x="866.50" y="489.30" font-size="3" fill="#e8e0f0" font-weight="700" font-style="italic" text-anchor="middle">DREAMS</text><text x="772.00" y="486.40" font-size="3.2" fill="#6a5080" >Play Series</text></svg><svg viewBox="1080 561 198 149" style="left:1080px;top:561px;width:198px;height:149px" font-family="Liberation Sans, sans-serif"><defs>
<linearGradient id="oWood" x1="0" y1="0" x2="0" y2="1"><stop offset="0" stop-color="#c8661e"/><stop offset="0.6" stop-color="#bc5a18"/><stop offset="1" stop-color="#a44c14"/></linearGradient>
<linearGradient id="oWood2" x1="0" y1="0" x2="0" y2="1"><stop offset="0" stop-color="#7a3e10"/><stop offset="1" stop-color="#a45216"/></linearGradient>
<linearGradient id="oCream" x1="0" y1="0" x2="0" y2="1"><stop offset="0" stop-color="#f4f0d8"/><stop offset="1" stop-color="#d6d0b0"/></linearGradient>
<linearGradient id="oBrown" x1="0" y1="0" x2="0" y2="1"><stop offset="0" stop-color="#c0642a"/><stop offset="1" stop-color="#8a3e14"/></linearGradient>
</defs><rect x="1080.00" y="561.00" width="198.00" height="149.00" fill="#141414" /><rect x="1081.00" y="562.20" width="196.50" height="10.40" fill="#101010" /><text x="1083.60" y="569.90" font-size="6.864000000000001" fill="#dcdcdc" font-weight="700" textLength="39.5" lengthAdjust="spacingAndGlyphs">KONTAKT</text><text x="1126.84" y="569.90" font-size="6.864000000000001" fill="#8c8c8c" font-style="italic" textLength="17.5" lengthAdjust="spacingAndGlyphs">Player</text><text x="1151.55" y="569.27" font-size="3.5692800000000005" fill="#8a8a8a" >FILE</text><text x="1165.28" y="569.27" font-size="3.5692800000000005" fill="#8a8a8a" >LIBRARY</text><text x="1185.87" y="569.27" font-size="3.5692800000000005" fill="#8a8a8a" >VIEW</text><text x="1206.17" y="569.27" font-size="3.5692800000000005" fill="#8a8a8a" >SHOP</text><rect x="1219.53" y="564.28" width="0.40" height="6.24" fill="#444" /><text x="1221.50" y="566.98" font-size="2.8554240000000006" fill="#999" >♪ 0</text><text x="1221.50" y="571.14" font-size="2.8554240000000006" fill="#999" >≡ 87.27M</text><text x="1238.20" y="566.98" font-size="2.8554240000000006" fill="#999" >CPU 0%</text><text x="1238.20" y="571.14" font-size="2.8554240000000006" fill="#999" >Disk 0%</text><rect x="1260.21" y="564.80" width="0.70" height="5.20" fill="#777" /><path d="M1269.5,570.104V565.008L1273.3,570.104V565.008H1275.5" fill="none" stroke="#aaa" stroke-width="0.7"/><rect x="1081.00" y="573.20" width="196.50" height="33.80" fill="url(#oWood)" /><rect x="1081.00" y="573.20" width="196.50" height="1.00" fill="#e8893a" /><rect x="1097.50" y="576.80" width="106.20" height="16.90" fill="#363636" /><rect x="1098.20" y="577.40" width="104.80" height="5.20" fill="#4c4c4c" /><rect x="1098.20" y="583.00" width="104.80" height="5.00" fill="#404040" /><rect x="1098.20" y="588.40" width="104.80" height="4.80" fill="#3a3a3a" /><text x="1105.00" y="581.60" font-size="3.7" fill="#f0f0f0" font-weight="700">Tonewheel Organ B3</text><text x="1100.00" y="586.90" font-size="2.8" fill="#bbb" >Output: st.1</text><text x="1144.00" y="586.90" font-size="2.8" fill="#bbb" >Voices:  0   Max: 500</text><text x="1186.00" y="586.90" font-size="2.8" fill="#ddd" font-weight="700">Purge</text><text x="1100.00" y="592.10" font-size="2.8" fill="#bbb" >MIDI Ch: Omni</text><text x="1144.00" y="592.10" font-size="2.8" fill="#bbb" >Memory: 87.27 MB</text><rect x="1187.00" y="590.00" width="14.50" height="1.60" fill="#ddd" /><rect x="1084.60" y="577.00" width="10.00" height="4.60" fill="#e0e0e0" /><circle cx="1089.60" cy="588.20" r="3.90" fill="none" stroke="#f0d8c0" stroke-width="1"/><circle cx="1089.60" cy="588.20" r="1.60" fill="none" stroke="#f0d8c0" stroke-width="0.6"/><rect x="1206.60" y="577.40" width="4.20" height="6.40" fill="#e8d8c8" /><rect x="1206.60" y="586.60" width="4.20" height="6.40" fill="#e8d8c8" /><circle cx="1219.60" cy="581.60" r="5.00" fill="#141414" /><circle cx="1219.60" cy="581.60" r="3.30" fill="#f4f4f4" /><rect x="1219.30" y="578.40" width="0.60" height="2.00" fill="#222" /><rect x="1226.80" y="577.20" width="13.60" height="3.60" fill="#8a3e10" /><rect x="1226.80" y="582.40" width="13.60" height="3.60" fill="#8a3e10" /><text x="1228.00" y="580.20" font-size="2.6" fill="#e8d0b0" >Tune</text><text x="1228.00" y="585.40" font-size="2.6" fill="#e8d0b0" >0.00</text><rect x="1214.50" y="588.80" width="26.00" height="4.60" fill="#4a4038" /><rect x="1216.00" y="589.80" width="22.00" height="2.40" fill="#6a6258" /><rect x="1243.00" y="577.00" width="27.00" height="4.80" fill="#5a5652" /><rect x="1243.00" y="582.60" width="27.00" height="4.80" fill="#5a5652" /><rect x="1243.00" y="588.80" width="27.00" height="4.60" fill="#4a4038" /><rect x="1245.00" y="590.20" width="14.00" height="1.60" fill="#e8e8e8" /><rect x="1272.00" y="576.40" width="3.40" height="3.00" fill="#3a2010" /><rect x="1272.00" y="580.60" width="3.40" height="3.00" fill="#3a2010" /><rect x="1272.00" y="584.80" width="3.40" height="3.00" fill="#ddd" /><rect x="1272.00" y="589.00" width="3.40" height="3.60" fill="#3a2010" /><text x="1270.00" y="603.60" font-size="5.4" fill="#8a3a0c" text-anchor="end" font-style="italic" font-family="Liberation Serif, serif">Vintage Organs</text><rect x="1081.00" y="606.80" width="196.50" height="12.40" fill="url(#oWood2)" /><text x="1140.00" y="612.00" font-size="2.4" fill="#e8c8a0" text-anchor="middle">LOWER MANUAL</text><text x="1231.00" y="612.00" font-size="2.4" fill="#e8c8a0" text-anchor="middle">UPPER MANUAL</text><rect x="1081.00" y="619.00" width="196.50" height="82.60" fill="#393931" /><rect x="1081.00" y="619.00" width="3.60" height="82.60" fill="#a8501a" /><rect x="1274.20" y="619.00" width="3.30" height="82.60" fill="#a8501a" /><rect x="1085.60" y="619.00" width="187.80" height="1.20" fill="#1e1e18" /><text x="1107.80" y="616.80" font-size="2.5" fill="#e8d0b0" text-anchor="middle">16'</text><rect x="1105.70" y="619.00" width="4.20" height="30.80" fill="#1a1a16" /><path d="M1107.8,620V648.8" stroke="#e6e6da" stroke-width="1.5" stroke-dasharray="0.7 1.1" opacity="0.75"/><rect x="1104.80" y="648.80" width="6.00" height="9.50" fill="url(#oBrown)" rx="0.6"/><text x="1116.30" y="616.80" font-size="2.5" fill="#e8d0b0" text-anchor="middle">5⅓'</text><rect x="1114.20" y="619.00" width="4.20" height="17.00" fill="#1a1a16" /><path d="M1116.3,620V635.0" stroke="#e6e6da" stroke-width="1.5" stroke-dasharray="0.7 1.1" opacity="0.75"/><rect x="1113.30" y="635.00" width="6.00" height="9.50" fill="url(#oBrown)" rx="0.6"/><text x="1124.90" y="616.80" font-size="2.5" fill="#e8d0b0" text-anchor="middle">8'</text><rect x="1122.80" y="619.00" width="4.20" height="20.50" fill="#1a1a16" /><path d="M1124.9,620V638.5" stroke="#e6e6da" stroke-width="1.5" stroke-dasharray="0.7 1.1" opacity="0.75"/><rect x="1121.90" y="638.50" width="6.00" height="9.50" fill="url(#oCream)" rx="0.6"/><text x="1133.20" y="616.80" font-size="2.5" fill="#e8d0b0" text-anchor="middle">4'</text><rect x="1131.10" y="619.00" width="4.20" height="13.90" fill="#1a1a16" /><path d="M1133.2,620V631.9" stroke="#e6e6da" stroke-width="1.5" stroke-dasharray="0.7 1.1" opacity="0.75"/><rect x="1130.20" y="631.90" width="6.00" height="9.50" fill="url(#oCream)" rx="0.6"/><text x="1141.80" y="616.80" font-size="2.5" fill="#e8d0b0" text-anchor="middle">2⅔'</text><rect x="1139.70" y="619.00" width="4.20" height="13.90" fill="#1a1a16" /><path d="M1141.8,620V631.9" stroke="#e6e6da" stroke-width="1.5" stroke-dasharray="0.7 1.1" opacity="0.75"/><rect x="1138.80" y="631.90" width="6.00" height="9.50" fill="#15150f" rx="0.6" stroke="#0a0a08" stroke-width="0.3"/><rect x="1139.60" y="636.20" width="4.40" height="0.80" fill="#555" /><text x="1150.30" y="616.80" font-size="2.5" fill="#e8d0b0" text-anchor="middle">2'</text><rect x="1148.20" y="619.00" width="4.20" height="13.50" fill="#1a1a16" /><path d="M1150.3,620V631.5" stroke="#e6e6da" stroke-width="1.5" stroke-dasharray="0.7 1.1" opacity="0.75"/><rect x="1147.30" y="631.50" width="6.00" height="9.50" fill="url(#oCream)" rx="0.6"/><text x="1159.00" y="616.80" font-size="2.5" fill="#e8d0b0" text-anchor="middle">1⅗'</text><rect x="1156.90" y="619.00" width="4.20" height="24.20" fill="#1a1a16" /><path d="M1159.0,620V642.2" stroke="#e6e6da" stroke-width="1.5" stroke-dasharray="0.7 1.1" opacity="0.75"/><rect x="1156.00" y="642.20" width="6.00" height="9.50" fill="#15150f" rx="0.6" stroke="#0a0a08" stroke-width="0.3"/><rect x="1156.80" y="646.50" width="4.40" height="0.80" fill="#555" /><text x="1167.50" y="616.80" font-size="2.5" fill="#e8d0b0" text-anchor="middle">1⅓'</text><rect x="1165.40" y="619.00" width="4.20" height="10.00" fill="#1a1a16" /><path d="M1167.5,620V628.0" stroke="#e6e6da" stroke-width="1.5" stroke-dasharray="0.7 1.1" opacity="0.75"/><rect x="1164.50" y="628.00" width="6.00" height="9.50" fill="#15150f" rx="0.6" stroke="#0a0a08" stroke-width="0.3"/><rect x="1165.30" y="632.30" width="4.40" height="0.80" fill="#555" /><text x="1176.00" y="616.80" font-size="2.5" fill="#e8d0b0" text-anchor="middle">1'</text><rect x="1173.90" y="619.00" width="4.20" height="3.90" fill="#1a1a16" /><path d="M1176.0,620V621.9" stroke="#e6e6da" stroke-width="1.5" stroke-dasharray="0.7 1.1" opacity="0.75"/><rect x="1173.00" y="621.90" width="6.00" height="9.50" fill="url(#oCream)" rx="0.6"/><text x="1197.50" y="616.80" font-size="2.5" fill="#e8d0b0" text-anchor="middle">16'</text><rect x="1195.40" y="619.00" width="4.20" height="30.80" fill="#1a1a16" /><path d="M1197.5,620V648.8" stroke="#e6e6da" stroke-width="1.5" stroke-dasharray="0.7 1.1" opacity="0.75"/><rect x="1194.50" y="648.80" width="6.00" height="9.50" fill="url(#oBrown)" rx="0.6"/><text x="1206.00" y="616.80" font-size="2.5" fill="#e8d0b0" text-anchor="middle">5⅓'</text><rect x="1203.90" y="619.00" width="4.20" height="30.80" fill="#1a1a16" /><path d="M1206.0,620V648.8" stroke="#e6e6da" stroke-width="1.5" stroke-dasharray="0.7 1.1" opacity="0.75"/><rect x="1203.00" y="648.80" width="6.00" height="9.50" fill="url(#oBrown)" rx="0.6"/><text x="1214.50" y="616.80" font-size="2.5" fill="#e8d0b0" text-anchor="middle">8'</text><rect x="1212.40" y="619.00" width="4.20" height="30.80" fill="#1a1a16" /><path d="M1214.5,620V648.8" stroke="#e6e6da" stroke-width="1.5" stroke-dasharray="0.7 1.1" opacity="0.75"/><rect x="1211.50" y="648.80" width="6.00" height="9.50" fill="url(#oCream)" rx="0.6"/><text x="1223.00" y="616.80" font-size="2.5" fill="#e8d0b0" text-anchor="middle">4'</text><rect x="1220.90" y="619.00" width="4.20" height="20.50" fill="#1a1a16" /><path d="M1223.0,620V638.5" stroke="#e6e6da" stroke-width="1.5" stroke-dasharray="0.7 1.1" opacity="0.75"/><rect x="1220.00" y="638.50" width="6.00" height="9.50" fill="url(#oCream)" rx="0.6"/><text x="1231.70" y="616.80" font-size="2.5" fill="#e8d0b0" text-anchor="middle">2⅔'</text><rect x="1229.60" y="619.00" width="4.20" height="13.90" fill="#1a1a16" /><path d="M1231.7,620V631.9" stroke="#e6e6da" stroke-width="1.5" stroke-dasharray="0.7 1.1" opacity="0.75"/><rect x="1228.70" y="631.90" width="6.00" height="9.50" fill="#15150f" rx="0.6" stroke="#0a0a08" stroke-width="0.3"/><rect x="1229.50" y="636.20" width="4.40" height="0.80" fill="#555" /><text x="1240.20" y="616.80" font-size="2.5" fill="#e8d0b0" text-anchor="middle">2'</text><rect x="1238.10" y="619.00" width="4.20" height="17.00" fill="#1a1a16" /><path d="M1240.2,620V635.0" stroke="#e6e6da" stroke-width="1.5" stroke-dasharray="0.7 1.1" opacity="0.75"/><rect x="1237.20" y="635.00" width="6.00" height="9.50" fill="url(#oCream)" rx="0.6"/><text x="1248.60" y="616.80" font-size="2.5" fill="#e8d0b0" text-anchor="middle">1⅗'</text><rect x="1246.50" y="619.00" width="4.20" height="10.00" fill="#1a1a16" /><path d="M1248.6,620V628.0" stroke="#e6e6da" stroke-width="1.5" stroke-dasharray="0.7 1.1" opacity="0.75"/><rect x="1245.60" y="628.00" width="6.00" height="9.50" fill="#15150f" rx="0.6" stroke="#0a0a08" stroke-width="0.3"/><rect x="1246.40" y="632.30" width="4.40" height="0.80" fill="#555" /><text x="1257.20" y="616.80" font-size="2.5" fill="#e8d0b0" text-anchor="middle">1⅓'</text><rect x="1255.10" y="619.00" width="4.20" height="10.00" fill="#1a1a16" /><path d="M1257.2,620V628.0" stroke="#e6e6da" stroke-width="1.5" stroke-dasharray="0.7 1.1" opacity="0.75"/><rect x="1254.20" y="628.00" width="6.00" height="9.50" fill="#15150f" rx="0.6" stroke="#0a0a08" stroke-width="0.3"/><rect x="1255.00" y="632.30" width="4.40" height="0.80" fill="#555" /><text x="1266.00" y="616.80" font-size="2.5" fill="#e8d0b0" text-anchor="middle">1'</text><rect x="1263.90" y="619.00" width="4.20" height="10.00" fill="#1a1a16" /><path d="M1266.0,620V628.0" stroke="#e6e6da" stroke-width="1.5" stroke-dasharray="0.7 1.1" opacity="0.75"/><rect x="1263.00" y="628.00" width="6.00" height="9.50" fill="url(#oCream)" rx="0.6"/><rect x="1088.00" y="628.30" width="9.50" height="4.60" fill="#dcc67a" rx="0.5"/><rect x="1088.00" y="634.60" width="9.50" height="4.60" fill="#c8c0a0" rx="0.5"/><rect x="1085.60" y="661.40" width="187.80" height="1.40" fill="#22221c" /><path d="M1085.6,663Q1097,682 1085.6,701.4Z" fill="#1c1c18"/><path d="M1273.4,663Q1262,682 1273.4,701.4Z" fill="#1c1c18"/><rect x="1103.00" y="667.20" width="47.00" height="0.50" fill="#aaa" opacity="0.5"/><rect x="1203.00" y="667.20" width="54.00" height="0.50" fill="#aaa" opacity="0.5"/><text x="1126.50" y="668.20" font-size="2.6" fill="#ddd" text-anchor="middle">VIBRATO</text><text x="1165.00" y="668.20" font-size="2.6" fill="#ddd" text-anchor="middle">PRESETS</text><text x="1189.50" y="668.20" font-size="2.6" fill="#ddd" text-anchor="middle">MODE</text><text x="1230.50" y="668.20" font-size="2.6" fill="#ddd" text-anchor="middle">PERCUSSION</text><rect x="1121.00" y="666.00" width="11.00" height="3.00" fill="#393931" /><rect x="1220.00" y="666.00" width="21.00" height="3.00" fill="#393931" /><text x="1126.50" y="668.20" font-size="2.6" fill="#ddd" text-anchor="middle">VIBRATO</text><text x="1230.50" y="668.20" font-size="2.6" fill="#ddd" text-anchor="middle">PERCUSSION</text><rect x="1103.00" y="671.00" width="11.50" height="20.70" fill="url(#oCream)" rx="0.8" stroke="#222" stroke-width="0.4"/><text x="1108.75" y="675.60" font-size="2.4" fill="#555" text-anchor="middle">OFF</text><text x="1108.75" y="689.00" font-size="2.4" fill="#555" text-anchor="middle">ON</text><rect x="1105.00" y="680.00" width="7.50" height="0.60" fill="#888" /><rect x="1105.00" y="682.00" width="7.50" height="0.60" fill="#888" /><rect x="1116.80" y="671.00" width="11.50" height="20.70" fill="url(#oCream)" rx="0.8" stroke="#222" stroke-width="0.4"/><text x="1122.55" y="675.60" font-size="2.4" fill="#555" text-anchor="middle">OFF</text><text x="1122.55" y="689.00" font-size="2.4" fill="#555" text-anchor="middle">ON</text><rect x="1118.80" y="680.00" width="7.50" height="0.60" fill="#888" /><rect x="1118.80" y="682.00" width="7.50" height="0.60" fill="#888" /><rect x="1131.40" y="672.00" width="19.60" height="19.70" fill="#151512" /><circle cx="1141.20" cy="682.00" r="4.40" fill="#0a0a0a" stroke="#333" stroke-width="0.5"/><rect x="1140.90" y="678.40" width="0.70" height="3.60" fill="#ddd" /><text x="1141.20" y="675.40" font-size="2.1" fill="#ccc" text-anchor="middle">V-3</text><text x="1134.60" y="679.00" font-size="2.1" fill="#ccc" text-anchor="middle">V-2</text><text x="1147.80" y="679.00" font-size="2.1" fill="#ccc" text-anchor="middle">C-2</text><text x="1134.60" y="687.00" font-size="2.1" fill="#ccc" text-anchor="middle">V-1</text><text x="1147.80" y="687.00" font-size="2.1" fill="#ccc" text-anchor="middle">C-1</text><text x="1141.20" y="690.60" font-size="2.1" fill="#ccc" text-anchor="middle">C-3</text><circle cx="1165.20" cy="681.80" r="5.10" fill="#0c0c0a" stroke="#2a2a24" stroke-width="0.6"/><rect x="1164.90" y="682.00" width="0.70" height="4.00" fill="#ddd" transform="rotate(20 1165.2 681.8)"/><circle cx="1165.20" cy="681.80" r="7.60" fill="none" stroke="#ddd" stroke-width="0.9" stroke-dasharray="0.8 3.2"/><circle cx="1189.50" cy="681.80" r="5.10" fill="#0c0c0a" stroke="#2a2a24" stroke-width="0.6"/><rect x="1189.20" y="677.60" width="0.70" height="4.00" fill="#ddd" transform="rotate(-40 1189.5 681.8)"/><text x="1182.00" y="674.60" font-size="2.1" fill="#ccc" text-anchor="middle">KEY</text><text x="1197.00" y="674.60" font-size="2.1" fill="#ccc" text-anchor="middle">MIDI</text><text x="1183.00" y="691.40" font-size="2.1" fill="#ccc" text-anchor="middle">LOWER</text><text x="1196.40" y="691.40" font-size="2.1" fill="#ccc" text-anchor="middle">UPPER</text><rect x="1204.50" y="671.00" width="11.70" height="20.70" fill="url(#oCream)" rx="0.8" stroke="#222" stroke-width="0.4"/><text x="1210.35" y="675.60" font-size="2.3" fill="#555" text-anchor="middle">ON</text><text x="1210.35" y="689.00" font-size="2.1" fill="#555" text-anchor="middle">OFF</text><rect x="1206.50" y="680.00" width="7.70" height="0.60" fill="#888" /><rect x="1206.50" y="682.00" width="7.70" height="0.60" fill="#888" /><rect x="1218.30" y="671.00" width="11.70" height="20.70" fill="url(#oCream)" rx="0.8" stroke="#222" stroke-width="0.4"/><text x="1224.15" y="675.60" font-size="2.3" fill="#555" text-anchor="middle">SOFT</text><text x="1224.15" y="689.00" font-size="2.1" fill="#555" text-anchor="middle">NORMAL</text><rect x="1220.30" y="680.00" width="7.70" height="0.60" fill="#888" /><rect x="1220.30" y="682.00" width="7.70" height="0.60" fill="#888" /><rect x="1232.20" y="671.00" width="11.70" height="20.70" fill="url(#oCream)" rx="0.8" stroke="#222" stroke-width="0.4"/><text x="1238.05" y="675.60" font-size="2.3" fill="#555" text-anchor="middle">FAST</text><text x="1238.05" y="689.00" font-size="2.1" fill="#555" text-anchor="middle">SLOW</text><rect x="1234.20" y="680.00" width="7.70" height="0.60" fill="#888" /><rect x="1234.20" y="682.00" width="7.70" height="0.60" fill="#888" /><rect x="1246.00" y="671.00" width="11.70" height="20.70" fill="url(#oCream)" rx="0.8" stroke="#222" stroke-width="0.4"/><text x="1251.85" y="675.60" font-size="2.3" fill="#555" text-anchor="middle">THIRD</text><text x="1251.85" y="689.00" font-size="2.1" fill="#555" text-anchor="middle">SECOND</text><rect x="1248.00" y="680.00" width="7.70" height="0.60" fill="#888" /><rect x="1248.00" y="682.00" width="7.70" height="0.60" fill="#888" /><rect x="1154.80" y="694.50" width="9.20" height="4.50" fill="#e8c870" rx="0.5"/><rect x="1166.80" y="694.50" width="9.20" height="4.50" fill="#e8c870" rx="0.5"/><rect x="1088.80" y="676.00" width="3.60" height="13.00" fill="#2c2c28" rx="1.4"/><rect x="1089.30" y="683.00" width="2.60" height="5.00" fill="#111" rx="1"/><text x="1091.00" y="673.60" font-size="2" fill="#ccc" text-anchor="middle">FAST</text><text x="1091.00" y="692.60" font-size="2" fill="#ccc" text-anchor="middle">SLOW</text><rect x="1267.20" y="676.00" width="1.20" height="10.00" fill="#888" /><circle cx="1267.80" cy="675.00" r="1.60" fill="#333" /><rect x="1081.00" y="701.40" width="196.50" height="0.80" fill="#7a3a10" /><rect x="1081.00" y="702.20" width="196.50" height="6.80" fill="#4e4e4e" /><rect x="1081.60" y="702.80" width="39.60" height="5.60" fill="#5a5a5a" /><rect x="1122.00" y="702.80" width="37.00" height="5.60" fill="#262626" /><rect x="1160.00" y="702.80" width="37.60" height="5.60" fill="#5a5a5a" /><rect x="1198.60" y="702.80" width="37.60" height="5.60" fill="#5a5a5a" /><text x="1083.60" y="707.00" font-size="2.5" fill="#eee" font-weight="700">Tonewheel Organ B3</text><text x="1124.00" y="707.00" font-size="2.5" fill="#ccc" >Organ</text><text x="1161.60" y="707.00" font-size="2.5" fill="#ddd" >Amp</text><text x="1200.20" y="707.00" font-size="2.5" fill="#ddd" >Settings</text></svg>
<div style="left:358.5px;transform:scaleX(0.905);transform-origin:0 50%;top:784.5px;height:20px;line-height:20px;font-size:13px;color:#fff;font-weight:400;white-space:nowrap;-webkit-text-stroke:0.2px #fff;">Mixing Console</div>
<svg viewBox="0 0 24 24" style="left:1585.8px;top:788.6px;width:14px;height:14px;"><path fill="#fff" d="M5,3V12H3V14H5V21H7V14H9V12H7V3M11,3V8H9V10H11V21H13V10H15V8H13V3M19,3V14H17V16H19V21H21V16H23V14H21V3Z"/></svg>
<div style="left:352px;top:820px;width:88px;height:217px;border:2px solid #22b14c;"></div>
<div style="left:96.0px;width:600px;text-align:center;transform:scaleX(0.895);transform-origin:50% 50%;top:824.0px;height:20px;line-height:20px;font-size:14px;color:#fff;font-weight:400;white-space:nowrap;-webkit-text-stroke:0.2px #fff;">Analog...</div>
<div style="left:357px;top:857px;width:16px;height:16px;background:#dcdcdc;"></div>
<div style="left:65px;width:600px;text-align:center;transform:scaleX(1);transform-origin:50% 50%;top:855.0px;height:20px;line-height:20px;font-size:8px;color:#555;font-weight:400;white-space:nowrap;-webkit-text-stroke:0.2px #555;">S</div>
<div style="left:418.5px;top:857px;width:16px;height:16px;background:#447aab;"></div>
<div style="left:126.5px;width:600px;text-align:center;transform:scaleX(1);transform-origin:50% 50%;top:855.0px;height:20px;line-height:20px;font-size:8px;color:#fff;font-weight:400;white-space:nowrap;-webkit-text-stroke:0.2px #fff;">M</div>
<div style="left:372px;top:888.7px;width:4px;height:1px;background:#3f6f9c;"></div>
<div style="left:372px;top:905.0px;width:4px;height:1px;background:#3f6f9c;"></div>
<div style="left:372px;top:915.8px;width:4px;height:1px;background:#3f6f9c;"></div>
<div style="left:372px;top:940.0px;width:4px;height:1px;background:#3f6f9c;"></div>
<div style="left:372px;top:956.0px;width:4px;height:1px;background:#3f6f9c;"></div>
<div style="left:372px;top:968.0px;width:4px;height:1px;background:#3f6f9c;"></div>
<div style="left:372px;top:977.0px;width:4px;height:1px;background:#3f6f9c;"></div>
<div style="left:372px;top:983.3px;width:4px;height:1px;background:#3f6f9c;"></div>
<div style="left:372px;top:987.0px;width:4px;height:1px;background:#3f6f9c;"></div>
<div style="left:372px;top:990.5px;width:4px;height:1px;background:#3f6f9c;"></div>
<div style="left:372px;top:997.0px;width:4px;height:1px;background:#3f6f9c;"></div>
<div style="left:386.4px;top:881px;width:4px;height:50px;background:#3a5168;border-radius:2px 2px 0 0;"></div>
<svg viewBox="0 0 4 100" preserveAspectRatio="none" style="left:386.4px;top:931px;width:4px;height:77px"><path d="M0,0H4V97L2,100L0,97Z" fill="#447aab"/></svg>
<div style="left:378.4px;top:921px;width:20px;height:20px;background:#447aab;border-radius:50%;box-shadow:0 1px 2px rgba(0,0,0,.4);"></div>
<div style="left:422.2px;top:881px;width:7.3px;height:125.5px;background:linear-gradient(#f6c3c5 0%,#f8cfc4 10%,#fbe3b6 19%,#fdf2a6 23%,#d6f1d6 25%,#d3f0d7 60%,#daf3dd 100%);border:1px solid #222;"></div>
<div style="left:87.5px;width:600px;text-align:center;transform:scaleX(0.895);transform-origin:50% 50%;top:1008.0px;height:20px;line-height:20px;font-size:14px;color:#fff;font-weight:400;white-space:nowrap;-webkit-text-stroke:0.2px #fff;">-1,73 dB</div>
<div style="left:357px;top:1030px;width:60px;height:1px;background:#9a9a9a;"></div>
<div style="left:441px;top:820px;width:88px;height:217px;border:1px solid #8c8c8c;"></div>
<div style="left:185.0px;width:600px;text-align:center;transform:scaleX(0.895);transform-origin:50% 50%;top:824.0px;height:20px;line-height:20px;font-size:14px;color:#fff;font-weight:400;white-space:nowrap;-webkit-text-stroke:0.2px #fff;">Piano</div>
<div style="left:446px;top:857px;width:16px;height:16px;background:#dcdcdc;"></div>
<div style="left:154px;width:600px;text-align:center;transform:scaleX(1);transform-origin:50% 50%;top:855.0px;height:20px;line-height:20px;font-size:8px;color:#555;font-weight:400;white-space:nowrap;-webkit-text-stroke:0.2px #555;">S</div>
<div style="left:507.5px;top:857px;width:16px;height:16px;background:#dcdcdc;"></div>
<div style="left:215.5px;width:600px;text-align:center;transform:scaleX(1);transform-origin:50% 50%;top:855.0px;height:20px;line-height:20px;font-size:8px;color:#555;font-weight:400;white-space:nowrap;-webkit-text-stroke:0.2px #555;">M</div>
<div style="left:461px;top:888.7px;width:4px;height:1px;background:#3f6f9c;"></div>
<div style="left:461px;top:905.0px;width:4px;height:1px;background:#3f6f9c;"></div>
<div style="left:461px;top:915.8px;width:4px;height:1px;background:#3f6f9c;"></div>
<div style="left:461px;top:940.0px;width:4px;height:1px;background:#3f6f9c;"></div>
<div style="left:461px;top:956.0px;width:4px;height:1px;background:#3f6f9c;"></div>
<div style="left:461px;top:968.0px;width:4px;height:1px;background:#3f6f9c;"></div>
<div style="left:461px;top:977.0px;width:4px;height:1px;background:#3f6f9c;"></div>
<div style="left:461px;top:983.3px;width:4px;height:1px;background:#3f6f9c;"></div>
<div style="left:461px;top:987.0px;width:4px;height:1px;background:#3f6f9c;"></div>
<div style="left:461px;top:990.5px;width:4px;height:1px;background:#3f6f9c;"></div>
<div style="left:461px;top:997.0px;width:4px;height:1px;background:#3f6f9c;"></div>
<div style="left:475.4px;top:881px;width:4px;height:35.5px;background:#3a5168;border-radius:2px 2px 0 0;"></div>
<svg viewBox="0 0 4 100" preserveAspectRatio="none" style="left:475.4px;top:916.5px;width:4px;height:91.5px"><path d="M0,0H4V97L2,100L0,97Z" fill="#447aab"/></svg>
<div style="left:467.4px;top:906.5px;width:20px;height:20px;background:#447aab;border-radius:50%;box-shadow:0 1px 2px rgba(0,0,0,.4);"></div>
<div style="left:511.2px;top:881px;width:7.3px;height:125.5px;background:linear-gradient(#f6c3c5 0%,#f8cfc4 10%,#fbe3b6 19%,#fdf2a6 23%,#d6f1d6 25%,#d3f0d7 60%,#daf3dd 100%);border:1px solid #222;"></div>
<div style="left:176.5px;width:600px;text-align:center;transform:scaleX(0.895);transform-origin:50% 50%;top:1008.0px;height:20px;line-height:20px;font-size:14px;color:#fff;font-weight:400;white-space:nowrap;-webkit-text-stroke:0.2px #fff;">0,00 dB</div>
<div style="left:446px;top:1030px;width:60px;height:1px;background:#9a9a9a;"></div>
<div style="left:530px;top:820px;width:88px;height:217px;border:1px solid #8c8c8c;"></div>
<div style="left:274.0px;width:600px;text-align:center;transform:scaleX(0.895);transform-origin:50% 50%;top:824.0px;height:20px;line-height:20px;font-size:14px;color:#fff;font-weight:400;white-space:nowrap;-webkit-text-stroke:0.2px #fff;">Solid EQ</div>
<div style="left:535px;top:857px;width:16px;height:16px;background:#dcdcdc;"></div>
<div style="left:243px;width:600px;text-align:center;transform:scaleX(1);transform-origin:50% 50%;top:855.0px;height:20px;line-height:20px;font-size:8px;color:#555;font-weight:400;white-space:nowrap;-webkit-text-stroke:0.2px #555;">S</div>
<div style="left:596.5px;top:857px;width:16px;height:16px;background:#dcdcdc;"></div>
<div style="left:304.5px;width:600px;text-align:center;transform:scaleX(1);transform-origin:50% 50%;top:855.0px;height:20px;line-height:20px;font-size:8px;color:#555;font-weight:400;white-space:nowrap;-webkit-text-stroke:0.2px #555;">M</div>
<div style="left:550px;top:888.7px;width:4px;height:1px;background:#3f6f9c;"></div>
<div style="left:550px;top:905.0px;width:4px;height:1px;background:#3f6f9c;"></div>
<div style="left:550px;top:915.8px;width:4px;height:1px;background:#3f6f9c;"></div>
<div style="left:550px;top:940.0px;width:4px;height:1px;background:#3f6f9c;"></div>
<div style="left:550px;top:956.0px;width:4px;height:1px;background:#3f6f9c;"></div>
<div style="left:550px;top:968.0px;width:4px;height:1px;background:#3f6f9c;"></div>
<div style="left:550px;top:977.0px;width:4px;height:1px;background:#3f6f9c;"></div>
<div style="left:550px;top:983.3px;width:4px;height:1px;background:#3f6f9c;"></div>
<div style="left:550px;top:987.0px;width:4px;height:1px;background:#3f6f9c;"></div>
<div style="left:550px;top:990.5px;width:4px;height:1px;background:#3f6f9c;"></div>
<div style="left:550px;top:997.0px;width:4px;height:1px;background:#3f6f9c;"></div>
<div style="left:564.4px;top:881px;width:4px;height:35.5px;background:#3a5168;border-radius:2px 2px 0 0;"></div>
<svg viewBox="0 0 4 100" preserveAspectRatio="none" style="left:564.4px;top:916.5px;width:4px;height:91.5px"><path d="M0,0H4V97L2,100L0,97Z" fill="#447aab"/></svg>
<div style="left:556.4px;top:906.5px;width:20px;height:20px;background:#447aab;border-radius:50%;box-shadow:0 1px 2px rgba(0,0,0,.4);"></div>
<div style="left:600.2px;top:881px;width:7.3px;height:125.5px;background:linear-gradient(#f6c3c5 0%,#f8cfc4 10%,#fbe3b6 19%,#fdf2a6 23%,#d6f1d6 25%,#d3f0d7 60%,#daf3dd 100%);border:1px solid #222;"></div>
<div style="left:265.5px;width:600px;text-align:center;transform:scaleX(0.895);transform-origin:50% 50%;top:1008.0px;height:20px;line-height:20px;font-size:14px;color:#fff;font-weight:400;white-space:nowrap;-webkit-text-stroke:0.2px #fff;">0,00 dB</div>
<div style="left:535px;top:1030px;width:60px;height:1px;background:#9a9a9a;"></div>
<div style="left:619px;top:820px;width:88px;height:217px;border:1px solid #8c8c8c;"></div>
<div style="left:363.0px;width:600px;text-align:center;transform:scaleX(0.895);transform-origin:50% 50%;top:824.0px;height:20px;line-height:20px;font-size:14px;color:#fff;font-weight:400;white-space:nowrap;-webkit-text-stroke:0.2px #fff;">Organ</div>
<div style="left:624px;top:857px;width:16px;height:16px;background:#dcdcdc;"></div>
<div style="left:332px;width:600px;text-align:center;transform:scaleX(1);transform-origin:50% 50%;top:855.0px;height:20px;line-height:20px;font-size:8px;color:#555;font-weight:400;white-space:nowrap;-webkit-text-stroke:0.2px #555;">S</div>
<div style="left:685.5px;top:857px;width:16px;height:16px;background:#dcdcdc;"></div>
<div style="left:393.5px;width:600px;text-align:center;transform:scaleX(1);transform-origin:50% 50%;top:855.0px;height:20px;line-height:20px;font-size:8px;color:#555;font-weight:400;white-space:nowrap;-webkit-text-stroke:0.2px #555;">M</div>
<div style="left:639px;top:888.7px;width:4px;height:1px;background:#3f6f9c;"></div>
<div style="left:639px;top:905.0px;width:4px;height:1px;background:#3f6f9c;"></div>
<div style="left:639px;top:915.8px;width:4px;height:1px;background:#3f6f9c;"></div>
<div style="left:639px;top:940.0px;width:4px;height:1px;background:#3f6f9c;"></div>
<div style="left:639px;top:956.0px;width:4px;height:1px;background:#3f6f9c;"></div>
<div style="left:639px;top:968.0px;width:4px;height:1px;background:#3f6f9c;"></div>
<div style="left:639px;top:977.0px;width:4px;height:1px;background:#3f6f9c;"></div>
<div style="left:639px;top:983.3px;width:4px;height:1px;background:#3f6f9c;"></div>
<div style="left:639px;top:987.0px;width:4px;height:1px;background:#3f6f9c;"></div>
<div style="left:639px;top:990.5px;width:4px;height:1px;background:#3f6f9c;"></div>
<div style="left:639px;top:997.0px;width:4px;height:1px;background:#3f6f9c;"></div>
<div style="left:653.4px;top:881px;width:4px;height:35.5px;background:#3a5168;border-radius:2px 2px 0 0;"></div>
<svg viewBox="0 0 4 100" preserveAspectRatio="none" style="left:653.4px;top:916.5px;width:4px;height:91.5px"><path d="M0,0H4V97L2,100L0,97Z" fill="#447aab"/></svg>
<div style="left:645.4px;top:906.5px;width:20px;height:20px;background:#447aab;border-radius:50%;box-shadow:0 1px 2px rgba(0,0,0,.4);"></div>
<div style="left:689.2px;top:881px;width:7.3px;height:125.5px;background:linear-gradient(#f6c3c5 0%,#f8cfc4 10%,#fbe3b6 19%,#fdf2a6 23%,#d6f1d6 25%,#d3f0d7 60%,#daf3dd 100%);border:1px solid #222;"></div>
<div style="left:354.5px;width:600px;text-align:center;transform:scaleX(0.895);transform-origin:50% 50%;top:1008.0px;height:20px;line-height:20px;font-size:14px;color:#fff;font-weight:400;white-space:nowrap;-webkit-text-stroke:0.2px #fff;">0,00 dB</div>
<div style="left:624px;top:1030px;width:60px;height:1px;background:#9a9a9a;"></div>
<div style="left:1516px;top:820px;width:87px;height:217px;border:1px solid #8c8c8c;"></div>
<div style="left:1259.5px;width:600px;text-align:center;transform:scaleX(0.895);transform-origin:50% 50%;top:824.0px;height:20px;line-height:20px;font-size:14px;color:#fff;font-weight:400;white-space:nowrap;-webkit-text-stroke:0.2px #fff;">Output</div>
<div style="left:1521px;top:857px;width:16px;height:16px;background:#dcdcdc;"></div>
<div style="left:1229px;width:600px;text-align:center;transform:scaleX(1);transform-origin:50% 50%;top:855.0px;height:20px;line-height:20px;font-size:8px;color:#555;font-weight:400;white-space:nowrap;-webkit-text-stroke:0.2px #555;">S</div>
<div style="left:1581.5px;top:857px;width:16px;height:16px;background:#dcdcdc;"></div>
<div style="left:1289.5px;width:600px;text-align:center;transform:scaleX(1);transform-origin:50% 50%;top:855.0px;height:20px;line-height:20px;font-size:8px;color:#555;font-weight:400;white-space:nowrap;-webkit-text-stroke:0.2px #555;">M</div>
<div style="left:1536px;top:888.7px;width:4px;height:1px;background:#3f6f9c;"></div>
<div style="left:1536px;top:905.0px;width:4px;height:1px;background:#3f6f9c;"></div>
<div style="left:1536px;top:915.8px;width:4px;height:1px;background:#3f6f9c;"></div>
<div style="left:1536px;top:940.0px;width:4px;height:1px;background:#3f6f9c;"></div>
<div style="left:1536px;top:956.0px;width:4px;height:1px;background:#3f6f9c;"></div>
<div style="left:1536px;top:968.0px;width:4px;height:1px;background:#3f6f9c;"></div>
<div style="left:1536px;top:977.0px;width:4px;height:1px;background:#3f6f9c;"></div>
<div style="left:1536px;top:983.3px;width:4px;height:1px;background:#3f6f9c;"></div>
<div style="left:1536px;top:987.0px;width:4px;height:1px;background:#3f6f9c;"></div>
<div style="left:1536px;top:990.5px;width:4px;height:1px;background:#3f6f9c;"></div>
<div style="left:1536px;top:997.0px;width:4px;height:1px;background:#3f6f9c;"></div>
<div style="left:1550.4px;top:881px;width:4px;height:35.5px;background:#3a5168;border-radius:2px 2px 0 0;"></div>
<svg viewBox="0 0 4 100" preserveAspectRatio="none" style="left:1550.4px;top:916.5px;width:4px;height:91.5px"><path d="M0,0H4V97L2,100L0,97Z" fill="#447aab"/></svg>
<div style="left:1542.4px;top:906.5px;width:20px;height:20px;background:#447aab;border-radius:50%;box-shadow:0 1px 2px rgba(0,0,0,.4);"></div>
<div style="left:1585.2px;top:881px;width:7.3px;height:125.5px;background:linear-gradient(#f6c3c5 0%,#f8cfc4 10%,#fbe3b6 19%,#fdf2a6 23%,#d6f1d6 25%,#d3f0d7 60%,#daf3dd 100%);border:1px solid #222;"></div>
<div style="left:1251.5px;width:600px;text-align:center;transform:scaleX(0.895);transform-origin:50% 50%;top:1008.0px;height:20px;line-height:20px;font-size:14px;color:#fff;font-weight:400;white-space:nowrap;-webkit-text-stroke:0.2px #fff;">0,00 dB</div>
<div style="left:1521px;top:1030px;width:60px;height:1px;background:#9a9a9a;"></div>
<div style="left:1622px;transform:scaleX(0.905);transform-origin:0 50%;top:62.5px;height:20px;line-height:20px;font-size:13px;color:#fff;font-weight:400;white-space:nowrap;-webkit-text-stroke:0.2px #fff;">Plugin Pool</div>
<svg viewBox="0 0 24 24" style="left:1900.8px;top:66px;width:15px;height:15px;"><path fill="#fff" d="M14,3.23V5.29C16.89,6.15 19,8.83 19,12C19,15.17 16.89,17.84 14,18.7V20.77C18,19.86 21,16.28 21,12C21,7.72 18,4.14 14,3.23M16.5,12C16.5,10.23 15.5,8.71 14,7.97V16C15.5,15.29 16.5,13.76 16.5,12M3,9V15H7L12,20V4L7,9H3Z"/></svg>
<div class="btn" style="left:1731px;top:102px;width:184px;height:25px"></div>
<div style="left:1523.0px;width:600px;text-align:center;transform:scaleX(0.86);transform-origin:50% 50%;top:104.8px;height:20px;line-height:20px;font-size:13px;color:#fff;font-weight:700;white-space:nowrap;">Scan All Plugins</div>
<div class="btn" style="left:1731px;top:135px;width:184px;height:25px"></div>
<div style="left:1523.0px;width:600px;text-align:center;transform:scaleX(0.86);transform-origin:50% 50%;top:137.8px;height:20px;line-height:20px;font-size:13px;color:#fff;font-weight:700;white-space:nowrap;">Update Plugins</div>
<div class="btn" style="left:1731px;top:168px;width:184px;height:25px"></div>
<div style="left:1523.0px;width:600px;text-align:center;transform:scaleX(0.86);transform-origin:50% 50%;top:170.8px;height:20px;line-height:20px;font-size:13px;color:#fff;font-weight:700;white-space:nowrap;">Plugins Directories</div>
<div style="left:1615px;top:201px;width:152px;height:20px;background:#447aab;"></div>
<div style="left:1767px;top:201px;width:152px;height:20px;background:#2e2e2e;"></div>
<div style="left:1391px;width:600px;text-align:center;transform:scaleX(0.895);transform-origin:50% 50%;top:200.5px;height:20px;line-height:20px;font-size:14px;color:#fff;font-weight:400;white-space:nowrap;-webkit-text-stroke:0.2px #fff;">Vendors</div>
<div style="left:1543px;width:600px;text-align:center;transform:scaleX(0.895);transform-origin:50% 50%;top:200.5px;height:20px;line-height:20px;font-size:14px;color:#fff;font-weight:400;white-space:nowrap;-webkit-text-stroke:0.2px #fff;">Folder Structure</div>
<svg viewBox="0 0 24 24" style="left:1625.4px;top:225.5px;width:18px;height:18px;"><path fill="#fff" d="M8.59,16.58L13.17,12L8.59,7.41L10,6L16,12L10,18L8.59,16.58Z"/></svg>
<svg viewBox="0 0 24 24" style="left:1658.8px;top:224.7px;width:18px;height:18px;"><path fill="#fff" d="M20,18H4V8H20M20,6H12L10,4H4C2.89,4 2,4.89 2,6V18A2,2 0 0,0 4,20H20A2,2 0 0,0 22,18V8C22,6.89 21.1,6 20,6Z"/></svg>
<div style="left:1685px;transform:scaleX(0.925);transform-origin:0 50%;top:224.0px;height:20px;line-height:20px;font-size:13px;color:#fff;font-weight:400;white-space:nowrap;-webkit-text-stroke:0.2px #fff;">KORG</div>
<svg viewBox="0 0 6.5 6.5" style="left:1631.3px;top:264.6px;width:6.5px;height:6.5px"><path d="M5.5,0V5.5H0" fill="none" stroke="#fff" stroke-width="2"/></svg>
<svg viewBox="0 0 24 24" style="left:1658.8px;top:258.7px;width:18px;height:18px;"><path fill="#fff" d="M20,18H4V8H20M20,6H12L10,4H4C2.89,4 2,4.89 2,6V18A2,2 0 0,0 4,20H20A2,2 0 0,0 22,18V8C22,6.89 21.1,6 20,6Z"/></svg>
<div style="left:1685px;transform:scaleX(0.925);transform-origin:0 50%;top:258.0px;height:20px;line-height:20px;font-size:13px;color:#fff;font-weight:400;white-space:nowrap;-webkit-text-stroke:0.2px #fff;">Native Instruments</div>
<svg viewBox="0 0 24 24" style="left:1675px;top:293px;width:18px;height:18px;"><path fill="#fff" d="M14,3.23V5.29C16.89,6.15 19,8.83 19,12C19,15.17 16.89,17.84 14,18.7V20.77C18,19.86 21,16.28 21,12C21,7.72 18,4.14 14,3.23M16.5,12C16.5,10.23 15.5,8.71 14,7.97V16C15.5,15.29 16.5,13.76 16.5,12M3,9V15H7L12,20V4L7,9H3Z"/></svg>
<div style="left:1700.5px;transform:scaleX(0.925);transform-origin:0 50%;top:292.0px;height:20px;line-height:20px;font-size:13px;color:#fff;font-weight:400;white-space:nowrap;-webkit-text-stroke:0.2px #fff;">Battery 4</div>
<svg viewBox="0 0 24 24" style="left:1675px;top:327px;width:18px;height:18px;"><path fill="#fff" d="M14,3.23V5.29C16.89,6.15 19,8.83 19,12C19,15.17 16.89,17.84 14,18.7V20.77C18,19.86 21,16.28 21,12C21,7.72 18,4.14 14,3.23M16.5,12C16.5,10.23 15.5,8.71 14,7.97V16C15.5,15.29 16.5,13.76 16.5,12M3,9V15H7L12,20V4L7,9H3Z"/></svg>
<div style="left:1700.5px;transform:scaleX(0.925);transform-origin:0 50%;top:326.0px;height:20px;line-height:20px;font-size:13px;color:#fff;font-weight:400;white-space:nowrap;-webkit-text-stroke:0.2px #fff;">Flair</div>
<svg viewBox="0 0 24 24" style="left:1675px;top:361px;width:18px;height:18px;"><path fill="#fff" d="M14,3.23V5.29C16.89,6.15 19,8.83 19,12C19,15.17 16.89,17.84 14,18.7V20.77C18,19.86 21,16.28 21,12C21,7.72 18,4.14 14,3.23M16.5,12C16.5,10.23 15.5,8.71 14,7.97V16C15.5,15.29 16.5,13.76 16.5,12M3,9V15H7L12,20V4L7,9H3Z"/></svg>
<div style="left:1700.5px;transform:scaleX(0.925);transform-origin:0 50%;top:360.0px;height:20px;line-height:20px;font-size:13px;color:#fff;font-weight:400;white-space:nowrap;-webkit-text-stroke:0.2px #fff;">FM8</div>
<svg viewBox="0 0 24 24" style="left:1675px;top:395px;width:18px;height:18px;"><path fill="#fff" d="M14,3.23V5.29C16.89,6.15 19,8.83 19,12C19,15.17 16.89,17.84 14,18.7V20.77C18,19.86 21,16.28 21,12C21,7.72 18,4.14 14,3.23M16.5,12C16.5,10.23 15.5,8.71 14,7.97V16C15.5,15.29 16.5,13.76 16.5,12M3,9V15H7L12,20V4L7,9H3Z"/></svg>
<div style="left:1700.5px;transform:scaleX(0.925);transform-origin:0 50%;top:394.0px;height:20px;line-height:20px;font-size:13px;color:#fff;font-weight:400;white-space:nowrap;-webkit-text-stroke:0.2px #fff;">FM8 FX</div>
<svg viewBox="0 0 24 24" style="left:1675px;top:429px;width:18px;height:18px;"><path fill="#fff" d="M14,3.23V5.29C16.89,6.15 19,8.83 19,12C19,15.17 16.89,17.84 14,18.7V20.77C18,19.86 21,16.28 21,12C21,7.72 18,4.14 14,3.23M16.5,12C16.5,10.23 15.5,8.71 14,7.97V16C15.5,15.29 16.5,13.76 16.5,12M3,9V15H7L12,20V4L7,9H3Z"/></svg>
<div style="left:1700.5px;transform:scaleX(0.925);transform-origin:0 50%;top:428.0px;height:20px;line-height:20px;font-size:13px;color:#fff;font-weight:400;white-space:nowrap;-webkit-text-stroke:0.2px #fff;">Komplete Kontrol</div>
<div style="left:1667px;top:455px;width:231px;height:34px;background:#505050;"></div>
<svg viewBox="0 0 24 24" style="left:1675px;top:463px;width:18px;height:18px;"><path fill="#fff" d="M14,3.23V5.29C16.89,6.15 19,8.83 19,12C19,15.17 16.89,17.84 14,18.7V20.77C18,19.86 21,16.28 21,12C21,7.72 18,4.14 14,3.23M16.5,12C16.5,10.23 15.5,8.71 14,7.97V16C15.5,15.29 16.5,13.76 16.5,12M3,9V15H7L12,20V4L7,9H3Z"/></svg>
<div style="left:1700.5px;transform:scaleX(0.925);transform-origin:0 50%;top:462.0px;height:20px;line-height:20px;font-size:13px;color:#fff;font-weight:400;white-space:nowrap;-webkit-text-stroke:0.2px #fff;">Kontakt 7</div>
<svg viewBox="0 0 24 24" style="left:1675px;top:497px;width:18px;height:18px;"><path fill="#fff" d="M14,3.23V5.29C16.89,6.15 19,8.83 19,12C19,15.17 16.89,17.84 14,18.7V20.77C18,19.86 21,16.28 21,12C21,7.72 18,4.14 14,3.23M16.5,12C16.5,10.23 15.5,8.71 14,7.97V16C15.5,15.29 16.5,13.76 16.5,12M3,9V15H7L12,20V4L7,9H3Z"/></svg>
<div style="left:1700.5px;transform:scaleX(0.925);transform-origin:0 50%;top:496.0px;height:20px;line-height:20px;font-size:13px;color:#fff;font-weight:400;white-space:nowrap;-webkit-text-stroke:0.2px #fff;">RC 24</div>
<svg viewBox="0 0 24 24" style="left:1675px;top:531px;width:18px;height:18px;"><path fill="#fff" d="M14,3.23V5.29C16.89,6.15 19,8.83 19,12C19,15.17 16.89,17.84 14,18.7V20.77C18,19.86 21,16.28 21,12C21,7.72 18,4.14 14,3.23M16.5,12C16.5,10.23 15.5,8.71 14,7.97V16C15.5,15.29 16.5,13.76 16.5,12M3,9V15H7L12,20V4L7,9H3Z"/></svg>
<div style="left:1700.5px;transform:scaleX(0.925);transform-origin:0 50%;top:530.0px;height:20px;line-height:20px;font-size:13px;color:#fff;font-weight:400;white-space:nowrap;-webkit-text-stroke:0.2px #fff;">RC 48</div>
<svg viewBox="0 0 24 24" style="left:1675px;top:565px;width:18px;height:18px;"><path fill="#fff" d="M14,3.23V5.29C16.89,6.15 19,8.83 19,12C19,15.17 16.89,17.84 14,18.7V20.77C18,19.86 21,16.28 21,12C21,7.72 18,4.14 14,3.23M16.5,12C16.5,10.23 15.5,8.71 14,7.97V16C15.5,15.29 16.5,13.76 16.5,12M3,9V15H7L12,20V4L7,9H3Z"/></svg>
<div style="left:1700.5px;transform:scaleX(0.925);transform-origin:0 50%;top:564.0px;height:20px;line-height:20px;font-size:13px;color:#fff;font-weight:400;white-space:nowrap;-webkit-text-stroke:0.2px #fff;">Solid Bus Comp</div>
<svg viewBox="0 0 24 24" style="left:1675px;top:599px;width:18px;height:18px;"><path fill="#fff" d="M14,3.23V5.29C16.89,6.15 19,8.83 19,12C19,15.17 16.89,17.84 14,18.7V20.77C18,19.86 21,16.28 21,12C21,7.72 18,4.14 14,3.23M16.5,12C16.5,10.23 15.5,8.71 14,7.97V16C15.5,15.29 16.5,13.76 16.5,12M3,9V15H7L12,20V4L7,9H3Z"/></svg>
<div style="left:1700.5px;transform:scaleX(0.925);transform-origin:0 50%;top:598.0px;height:20px;line-height:20px;font-size:13px;color:#fff;font-weight:400;white-space:nowrap;-webkit-text-stroke:0.2px #fff;">Solid Dynamics</div>
<div style="left:1898px;top:225px;width:17px;height:17px;background:#474747;"></div>
<svg viewBox="0 0 24 24" style="left:1901px;top:228px;width:11px;height:11px;"><path fill="#646464" d="M13,20H11V8L5.5,13.5L4.08,12.08L12,4.16L19.92,12.08L18.5,13.5L13,8V20Z"/></svg>
<div style="left:1898px;top:600px;width:17px;height:17px;background:#474747;"></div>
<svg viewBox="0 0 24 24" style="left:1901px;top:603px;width:11px;height:11px;transform:rotate(180deg);"><path fill="#646464" d="M13,20H11V8L5.5,13.5L4.08,12.08L12,4.16L19.92,12.08L18.5,13.5L13,8V20Z"/></svg>
<div style="left:1898px;top:317px;width:17px;height:207px;background:#5c5c5c;"></div>
<div style="left:1615px;top:624px;width:304px;height:1px;background:#333;"></div>
<div style="left:1622px;transform:scaleX(0.905);transform-origin:0 50%;top:640.0px;height:20px;line-height:20px;font-size:13px;color:#fff;font-weight:400;white-space:nowrap;-webkit-text-stroke:0.2px #fff;">MIDI Input Devices</div>
<div class="btn" style="left:1730px;top:636px;width:80px;height:25px"></div>
<div style="left:1470.0px;width:600px;text-align:center;transform:scaleX(0.86);transform-origin:50% 50%;top:640.0999999999999px;height:20px;line-height:20px;font-size:13px;color:#fff;font-weight:700;white-space:nowrap;">Add</div>
<div class="btn" style="left:1815px;top:636px;width:80px;height:25px"></div>
<div style="left:1555.0px;width:600px;text-align:center;transform:scaleX(0.86);transform-origin:50% 50%;top:640.0999999999999px;height:20px;line-height:20px;font-size:13px;color:#fff;font-weight:700;white-space:nowrap;">Delete</div>
<svg viewBox="0 0 24 24" style="left:1900.8px;top:643px;width:15px;height:15px;"><path fill="#fff" d="M12,3V12.26C11.5,12.09 11,12 10.5,12C8,12 6,14 6,16.5C6,19 8,21 10.5,21C13,21 15,19 15,16.5V6H19V3H12Z"/></svg>
<div style="left:1619px;top:678px;width:296px;height:55px;background:#c0c0c0;"></div>
<svg viewBox="0 0 24 24" style="left:1626.6px;top:695.8px;width:18px;height:18px;"><path fill="#000" d="M12,3V12.26C11.5,12.09 11,12 10.5,12C8,12 6,14 6,16.5C6,19 8,21 10.5,21C13,21 15,19 15,16.5V6H19V3H12Z"/></svg>
<div style="left:1657.5px;transform:scaleX(0.895);transform-origin:0 50%;top:694.5px;height:20px;line-height:20px;font-size:14px;color:#111;font-weight:400;white-space:nowrap;-webkit-text-stroke:0.2px #111;">Keyboard 1</div>
<div style="left:1819px;transform:scaleX(0.895);transform-origin:0 50%;top:694.5px;height:20px;line-height:20px;font-size:14px;color:#111;font-weight:400;white-space:nowrap;-webkit-text-stroke:0.2px #111;">5- SL MkII</div>
<svg viewBox="0 0 10 5" style="left:1898.5px;top:702.5px;width:8px;height:4px"><path d="M0,0H10L5,5Z" fill="#c9c9c9"/></svg>
<div style="left:1818px;top:716px;width:89px;height:1px;background:#e4e4e4;"></div>
<svg viewBox="0 0 24 24" style="left:1626.6px;top:750.8px;width:18px;height:18px;"><path fill="#fff" d="M12,3V12.26C11.5,12.09 11,12 10.5,12C8,12 6,14 6,16.5C6,19 8,21 10.5,21C13,21 15,19 15,16.5V6H19V3H12Z"/></svg>
<div style="left:1657.5px;transform:scaleX(0.895);transform-origin:0 50%;top:749.5px;height:20px;line-height:20px;font-size:14px;color:#fff;font-weight:400;white-space:nowrap;-webkit-text-stroke:0.2px #fff;">Keyboard 2</div>
<div style="left:1819px;top:749.5px;width:76px;height:20px;overflow:hidden"><div style="position:absolute;left:0;top:0;line-height:20px;font-size:14px;color:#fff;white-space:nowrap;transform:scaleX(.905);transform-origin:0 50%">Komplete Kontrol</div></div>
<div style="left:1890px;top:749px;width:8px;height:20px;background:#282828;"></div>
<svg viewBox="0 0 10 5" style="left:1898.5px;top:757.5px;width:8px;height:4px"><path d="M0,0H10L5,5Z" fill="#9a9a9a"/></svg>
<div style="left:1818px;top:771px;width:89px;height:1px;background:#e4e4e4;"></div>
<div style="left:1615px;top:793px;width:304px;height:1px;background:#333;"></div>
<div style="left:1622px;transform:scaleX(0.905);transform-origin:0 50%;top:809.0px;height:20px;line-height:20px;font-size:13px;color:#fff;font-weight:400;white-space:nowrap;-webkit-text-stroke:0.2px #fff;">Audio Devices Pool</div>
<svg viewBox="0 0 24 24" style="left:1900.2px;top:810.8px;width:16px;height:16px;"><path fill="#fff" d="M12,12A3,3 0 0,0 9,15A3,3 0 0,0 12,18A3,3 0 0,0 15,15A3,3 0 0,0 12,12M12,20A5,5 0 0,1 7,15A5,5 0 0,1 12,10A5,5 0 0,1 17,15A5,5 0 0,1 12,20M12,4A2,2 0 0,1 14,6A2,2 0 0,1 12,8C10.89,8 10,7.1 10,6C10,4.89 10.89,4 12,4M17,2H7C5.89,2 5,2.89 5,4V20A2,2 0 0,0 7,22H17A2,2 0 0,0 19,20V4C19,2.89 18.1,2 17,2Z"/></svg>
<div style="left:1615px;top:847px;width:283px;height:189px;overflow:hidden">
<svg viewBox="0 0 24 24" style="left:12px;top:8.0px;width:18px;height:18px"><path fill="#fff" d="M12,12A3,3 0 0,0 9,15A3,3 0 0,0 12,18A3,3 0 0,0 15,15A3,3 0 0,0 12,12M12,20A5,5 0 0,1 7,15A5,5 0 0,1 12,10A5,5 0 0,1 17,15A5,5 0 0,1 12,20M12,4A2,2 0 0,1 14,6A2,2 0 0,1 12,8C10.89,8 10,7.1 10,6C10,4.89 10.89,4 12,4M17,2H7C5.89,2 5,2.89 5,4V20A2,2 0 0,0 7,22H17A2,2 0 0,0 19,20V4C19,2.89 18.1,2 17,2Z"/></svg>
<div style="left:42.5px;top:7.5px;height:20px;line-height:20px;font-size:14px;color:#fff;white-space:nowrap;transform:scaleX(.905);transform-origin:0 50%">ASIO4ALL v2</div>
<div style="left:4px;top:35.0px;width:279px;height:33.5px;background:#ababab"></div>
<div style="left:5.5px;top:36.5px;width:276px;height:30.5px;border:1px dotted #222"></div>
<svg viewBox="0 0 24 24" style="left:12px;top:42.0px;width:18px;height:18px"><path fill="#000" d="M12,12A3,3 0 0,0 9,15A3,3 0 0,0 12,18A3,3 0 0,0 15,15A3,3 0 0,0 12,12M12,20A5,5 0 0,1 7,15A5,5 0 0,1 12,10A5,5 0 0,1 17,15A5,5 0 0,1 12,20M12,4A2,2 0 0,1 14,6A2,2 0 0,1 12,8C10.89,8 10,7.1 10,6C10,4.89 10.89,4 12,4M17,2H7C5.89,2 5,2.89 5,4V20A2,2 0 0,0 7,22H17A2,2 0 0,0 19,20V4C19,2.89 18.1,2 17,2Z"/></svg>
<div style="left:42.5px;top:41.5px;height:20px;line-height:20px;font-size:14px;color:#111;white-space:nowrap;transform:scaleX(.905);transform-origin:0 50%">Focusrite USB ASIO</div>
<svg viewBox="0 0 24 24" style="left:12px;top:76.0px;width:18px;height:18px"><path fill="#fff" d="M12,12A3,3 0 0,0 9,15A3,3 0 0,0 12,18A3,3 0 0,0 15,15A3,3 0 0,0 12,12M12,20A5,5 0 0,1 7,15A5,5 0 0,1 12,10A5,5 0 0,1 17,15A5,5 0 0,1 12,20M12,4A2,2 0 0,1 14,6A2,2 0 0,1 12,8C10.89,8 10,7.1 10,6C10,4.89 10.89,4 12,4M17,2H7C5.89,2 5,2.89 5,4V20A2,2 0 0,0 7,22H17A2,2 0 0,0 19,20V4C19,2.89 18.1,2 17,2Z"/></svg>
<div style="left:42.5px;top:75.5px;height:20px;line-height:20px;font-size:14px;color:#fff;white-space:nowrap;transform:scaleX(.905);transform-origin:0 50%">Generic Low Latency ASIO Driver</div>
<svg viewBox="0 0 24 24" style="left:12px;top:110.0px;width:18px;height:18px"><path fill="#fff" d="M12,12A3,3 0 0,0 9,15A3,3 0 0,0 12,18A3,3 0 0,0 15,15A3,3 0 0,0 12,12M12,20A5,5 0 0,1 7,15A5,5 0 0,1 12,10A5,5 0 0,1 17,15A5,5 0 0,1 12,20M12,4A2,2 0 0,1 14,6A2,2 0 0,1 12,8C10.89,8 10,7.1 10,6C10,4.89 10.89,4 12,4M17,2H7C5.89,2 5,2.89 5,4V20A2,2 0 0,0 7,22H17A2,2 0 0,0 19,20V4C19,2.89 18.1,2 17,2Z"/></svg>
<div style="left:42.5px;top:109.5px;height:20px;line-height:20px;font-size:14px;color:#fff;white-space:nowrap;transform:scaleX(.905);transform-origin:0 50%">M-Audio M-Track Solo and Duo...</div>
<svg viewBox="0 0 24 24" style="left:12px;top:144.0px;width:18px;height:18px"><path fill="#fff" d="M12,12A3,3 0 0,0 9,15A3,3 0 0,0 12,18A3,3 0 0,0 15,15A3,3 0 0,0 12,12M12,20A5,5 0 0,1 7,15A5,5 0 0,1 12,10A5,5 0 0,1 17,15A5,5 0 0,1 12,20M12,4A2,2 0 0,1 14,6A2,2 0 0,1 12,8C10.89,8 10,7.1 10,6C10,4.89 10.89,4 12,4M17,2H7C5.89,2 5,2.89 5,4V20A2,2 0 0,0 7,22H17A2,2 0 0,0 19,20V4C19,2.89 18.1,2 17,2Z"/></svg>
<div style="left:42.5px;top:143.5px;height:20px;line-height:20px;font-size:14px;color:#fff;white-space:nowrap;transform:scaleX(.905);transform-origin:0 50%">UMC ASIO Driver</div>
<svg viewBox="0 0 24 24" style="left:12px;top:178.0px;width:18px;height:18px"><path fill="#fff" d="M12,12A3,3 0 0,0 9,15A3,3 0 0,0 12,18A3,3 0 0,0 15,15A3,3 0 0,0 12,12M12,20A5,5 0 0,1 7,15A5,5 0 0,1 12,10A5,5 0 0,1 17,15A5,5 0 0,1 12,20M12,4A2,2 0 0,1 14,6A2,2 0 0,1 12,8C10.89,8 10,7.1 10,6C10,4.89 10.89,4 12,4M17,2H7C5.89,2 5,2.89 5,4V20A2,2 0 0,0 7,22H17A2,2 0 0,0 19,20V4C19,2.89 18.1,2 17,2Z"/></svg>
<div style="left:42.5px;top:177.5px;height:20px;line-height:20px;font-size:14px;color:#fff;white-space:nowrap;transform:scaleX(.905);transform-origin:0 50%">US-1800</div>
</div>
<div style="left:1898px;top:847px;width:17px;height:17px;background:#474747;"></div>
<svg viewBox="0 0 24 24" style="left:1901px;top:850px;width:11px;height:11px;"><path fill="#646464" d="M13,20H11V8L5.5,13.5L4.08,12.08L12,4.16L19.92,12.08L18.5,13.5L13,8V20Z"/></svg>
<div style="left:1898px;top:1018px;width:17px;height:17px;background:#474747;"></div>
<svg viewBox="0 0 24 24" style="left:1901px;top:1021px;width:11px;height:11px;transform:rotate(180deg);"><path fill="#646464" d="M13,20H11V8L5.5,13.5L4.08,12.08L12,4.16L19.92,12.08L18.5,13.5L13,8V20Z"/></svg>
<div style="left:1898px;top:864px;width:17px;height:122px;background:#5c5c5c;"></div>
<div style="left:0px;top:23px;width:1px;height:1017px;background:#3c78b8;"></div>
<div style="left:1919px;top:23px;width:1px;height:1017px;background:#3c78b8;"></div>
<div style="left:0px;top:1039px;width:1920px;height:1px;background:#3c78b8;"></div>
</body></html>
